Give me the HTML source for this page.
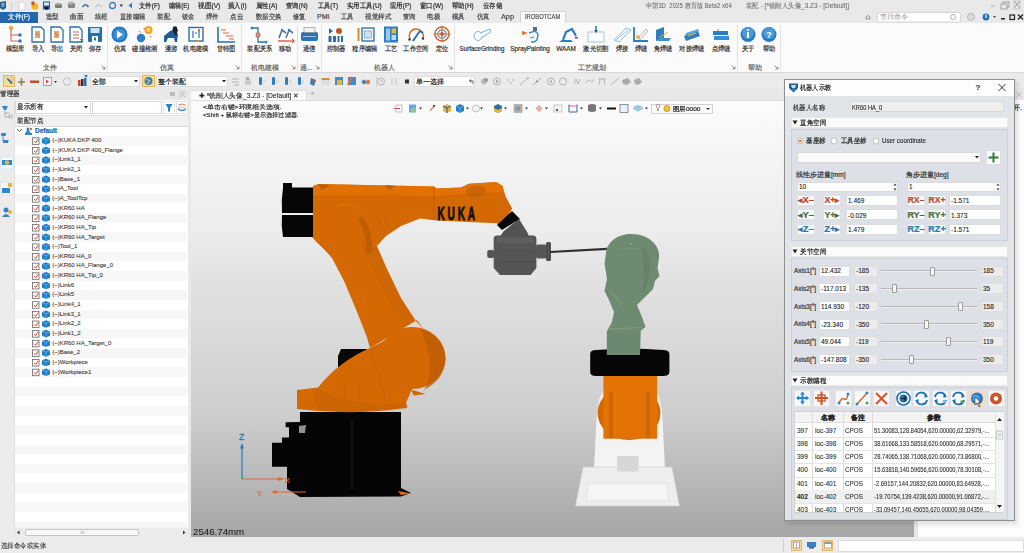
<!DOCTYPE html>
<html><head><meta charset="utf-8">
<style>
*{margin:0;padding:0;box-sizing:border-box}
html,body{width:1024px;height:553px;overflow:hidden;background:#e8e8e8;font-family:"Liberation Sans",sans-serif;font-size:7px;color:#333}
.a{position:absolute}
.t{position:absolute;white-space:nowrap;line-height:1;-webkit-text-stroke:0.2px currentColor}
.mn{position:absolute;top:2px;font-size:7.5px;color:#2a2a2a;white-space:nowrap;line-height:8px}
.tb{position:absolute;top:13.5px;font-size:7.5px;color:#444;white-space:nowrap;line-height:8px}
.rl{position:absolute;top:45px;font-size:7px;color:#333;white-space:nowrap;line-height:8px;transform:translateX(-50%)}
.gl{position:absolute;top:64px;font-size:7px;color:#666;white-space:nowrap;line-height:8px;transform:translateX(-50%)}
.ri{position:absolute;top:26px;width:16px;height:17px;transform:translateX(-50%)}
.sep{position:absolute;top:25px;width:1px;height:46px;background:#e2e2e2}
.lch{position:absolute;top:65px;width:4px;height:4px;border-right:1px solid #888;border-bottom:1px solid #888}
.ti{position:absolute;top:76px;width:10px;height:10px}
</style></head><body>
<div class="a" style="left:0;top:0;width:1024px;height:23px;background:#e9e9ea"></div>
<svg class="a" style="left:0;top:0" width="136" height="12" viewBox="0 0 136 12"><path d="M0 2 L6 1 L6 8 L3 10 L0 8Z" fill="#2b5d8e"/><path d="M1 3 L5 3 L4 7 L2 7Z" fill="#7aa6cc"/><rect x="11" y="2" width="1" height="8" fill="#cfcfcf"/><path d="M19 2 L23 2 L25 4 L25 10 L19 10Z" fill="#fbfbfb" stroke="#c8c8c8" stroke-width="0.6"/><circle cx="35" cy="6.5" r="3.3" fill="#f3b81e"/><path d="M31 2 L34 1 L35 4 L32 6Z" fill="#d2592a"/><rect x="43" y="1.5" width="7" height="8" fill="#1d5a94"/><rect x="44" y="2.5" width="5" height="3" fill="#dce9f5"/><rect x="45" y="7" width="3" height="2.5" fill="#111"/><rect x="55" y="4" width="7" height="4" rx="1" fill="#7d7d7d"/><rect x="56" y="3" width="5" height="2" fill="#aaa"/><rect x="68" y="3" width="7" height="5" rx="1" fill="#858585"/><rect x="69" y="1.5" width="4" height="3" fill="#b5b5b5"/><path d="M82.5 7 Q85.5 2.5 88.5 7" fill="none" stroke="#2d6aa5" stroke-width="1.4"/><path d="M95.5 7 Q98.5 2.5 101.5 7" fill="none" stroke="#b8b8b8" stroke-width="1.2"/><circle cx="112.5" cy="5.5" r="3" fill="none" stroke="#3a7bbf" stroke-width="1.3"/><path d="M119.5 4.5 L123 4.5 L121.25 7Z" fill="#333"/><path d="M132 2.5 L132 8.5 L128.5 5.5Z" fill="#2d86d2"/></svg>
<div class="t" id="tx1" style="left:139px;top:1.5px;font-size:7px;color:#2a2a2a;line-height:8.4px;transform:scaleX(0.913);transform-origin:0 0;">文件(F)</div>
<div class="t" id="tx2" style="left:169px;top:1.5px;font-size:7px;color:#2a2a2a;line-height:8.4px;transform:scaleX(0.870);transform-origin:0 0;">编辑(E)</div>
<div class="t" id="tx3" style="left:198px;top:1.5px;font-size:7px;color:#2a2a2a;line-height:8.4px;transform:scaleX(0.957);transform-origin:0 0;">视图(V)</div>
<div class="t" id="tx4" style="left:228px;top:1.5px;font-size:7px;color:#2a2a2a;line-height:8.4px;transform:scaleX(0.905);transform-origin:0 0;">插入(I)</div>
<div class="t" id="tx5" style="left:256px;top:1.5px;font-size:7px;color:#2a2a2a;line-height:8.4px;transform:scaleX(0.913);transform-origin:0 0;">属性(A)</div>
<div class="t" id="tx6" style="left:286px;top:1.5px;font-size:7px;color:#2a2a2a;line-height:8.4px;transform:scaleX(0.917);transform-origin:0 0;">查询(N)</div>
<div class="t" id="tx7" style="left:318px;top:1.5px;font-size:7px;color:#2a2a2a;line-height:8.4px;transform:scaleX(0.870);transform-origin:0 0;">工具(T)</div>
<div class="t" id="tx8" style="left:347px;top:1.5px;font-size:7px;color:#2a2a2a;line-height:8.4px;transform:scaleX(0.921);transform-origin:0 0;">实用工具(U)</div>
<div class="t" id="tx9" style="left:390px;top:1.5px;font-size:7px;color:#2a2a2a;line-height:8.4px;transform:scaleX(0.913);transform-origin:0 0;">应用(P)</div>
<div class="t" id="tx10" style="left:420px;top:1.5px;font-size:7px;color:#2a2a2a;line-height:8.4px;transform:scaleX(0.920);transform-origin:0 0;">窗口(W)</div>
<div class="t" id="tx11" style="left:452px;top:1.5px;font-size:7px;color:#2a2a2a;line-height:8.4px;transform:scaleX(0.917);transform-origin:0 0;">帮助(H)</div>
<div class="t" id="tx12" style="left:483px;top:1.5px;font-size:7px;color:#2a2a2a;line-height:8.4px;transform:scaleX(0.905);transform-origin:0 0;">云存储</div>
<div class="t" id="tx13" style="left:646px;top:1.5px;font-size:7px;color:#6a6a6a;line-height:8.4px;transform:scaleX(0.869);transform-origin:0 0;-webkit-text-stroke:0.05px #666;">中望3D&nbsp; 2025 教育版 Beta2 x64</div>
<div class="t" id="tx14" style="left:746px;top:1.5px;font-size:7px;color:#6a6a6a;line-height:8.4px;transform:scaleX(0.920);transform-origin:0 0;-webkit-text-stroke:0.05px #666;">装配 - [*铣削人头像_3.Z3 - [Default]]</div>
<svg class="a" style="left:985px;top:0" width="39" height="11"><rect x="6" y="5.5" width="4" height="1" fill="#aaa"/><rect x="18" y="2" width="6" height="5" fill="none" stroke="#999" stroke-width="0.9"/><rect x="16" y="4" width="6" height="5" fill="#e9e9ea" stroke="#999" stroke-width="0.9"/><path d="M29 1 L35 8 M35 1 L29 8" stroke="#999" stroke-width="1"/><rect x="29" y="1" width="6" height="8" fill="none" stroke="#aaa" stroke-width="0.5"/></svg>
<div class="a" style="left:0;top:12px;width:38px;height:11px;background:#2466ae"></div>
<div class="t" id="tx15" style="left:8px;top:13px;font-size:7px;color:#e6f0fb;line-height:8.4px;transform:scaleX(0.957);transform-origin:0 0;">文件(F)</div>
<div class="t" id="tx16" style="left:45.6px;top:13px;font-size:7px;color:#444;line-height:8.4px;transform:scaleX(0.914);transform-origin:0 0;">造型</div>
<div class="t" id="tx17" style="left:70px;top:13px;font-size:7px;color:#444;line-height:8.4px;transform:scaleX(0.964);transform-origin:0 0;">曲面</div>
<div class="t" id="tx18" style="left:95px;top:13px;font-size:7px;color:#444;line-height:8.4px;transform:scaleX(0.893);transform-origin:0 0;">线框</div>
<div class="t" id="tx19" style="left:120px;top:13px;font-size:7px;color:#444;line-height:8.4px;transform:scaleX(0.893);transform-origin:0 0;">直接编辑</div>
<div class="t" id="tx20" style="left:157px;top:13px;font-size:7px;color:#444;line-height:8.4px;transform:scaleX(0.929);transform-origin:0 0;">装配</div>
<div class="t" id="tx21" style="left:182px;top:13px;font-size:7px;color:#444;line-height:8.4px;transform:scaleX(0.893);transform-origin:0 0;">钣金</div>
<div class="t" id="tx22" style="left:206px;top:13px;font-size:7px;color:#444;line-height:8.4px;transform:scaleX(0.893);transform-origin:0 0;">焊件</div>
<div class="t" id="tx23" style="left:230px;top:13px;font-size:7px;color:#444;line-height:8.4px;transform:scaleX(0.929);transform-origin:0 0;">点云</div>
<div class="t" id="tx24" style="left:255.7px;top:13px;font-size:7px;color:#444;line-height:8.4px;transform:scaleX(0.911);transform-origin:0 0;">数据交换</div>
<div class="t" id="tx25" style="left:293px;top:13px;font-size:7px;color:#444;line-height:8.4px;transform:scaleX(0.893);transform-origin:0 0;">修复</div>
<div class="t" id="tx26" style="left:317px;top:13px;font-size:7px;color:#444;line-height:8.4px;transform:scaleX(1.000);transform-origin:0 0;">PMI</div>
<div class="t" id="tx27" style="left:340.7px;top:13px;font-size:7px;color:#444;line-height:8.4px;transform:scaleX(0.893);transform-origin:0 0;">工具</div>
<div class="t" id="tx28" style="left:365px;top:13px;font-size:7px;color:#444;line-height:8.4px;transform:scaleX(0.929);transform-origin:0 0;">视觉样式</div>
<div class="t" id="tx29" style="left:402.8px;top:13px;font-size:7px;color:#444;line-height:8.4px;transform:scaleX(0.907);transform-origin:0 0;">查询</div>
<div class="t" id="tx30" style="left:427px;top:13px;font-size:7px;color:#444;line-height:8.4px;transform:scaleX(0.929);transform-origin:0 0;">电极</div>
<div class="t" id="tx31" style="left:451.7px;top:13px;font-size:7px;color:#444;line-height:8.4px;transform:scaleX(0.914);transform-origin:0 0;">模具</div>
<div class="t" id="tx32" style="left:477px;top:13px;font-size:7px;color:#444;line-height:8.4px;transform:scaleX(0.893);transform-origin:0 0;">仿真</div>
<div class="t" id="tx33" style="left:501px;top:13px;font-size:7px;color:#444;line-height:8.4px;transform:scaleX(1.042);transform-origin:0 0;">App</div>
<div class="a" style="left:520px;top:11px;width:46px;height:13px;background:#fbfbfb;border:1px solid #d4d4d4;border-bottom:none"></div>
<div class="t" id="tx34" style="left:525px;top:13px;font-size:6.5px;color:#555;line-height:7.8px;transform:scaleX(0.897);transform-origin:0 0;">IROBOTCAM</div>
<svg class="a" style="left:862px;top:11px" width="162" height="12"><path d="M4 8 L4 6 Q6 3 8 6 L8 8Z" fill="none" stroke="#888" stroke-width="0.9"/><rect x="15.5" y="1.5" width="83" height="9.5" fill="#fff" stroke="#d0d0d0" stroke-width="0.8"/><circle cx="91" cy="6" r="2.5" fill="none" stroke="#aaa" stroke-width="0.9"/><circle cx="109" cy="6" r="3.5" fill="#ddd" stroke="#aaa" stroke-width="0.8"/><circle cx="124" cy="6" r="3.4" fill="#1e6db8"/><rect x="123.3" y="3.5" width="1.4" height="3.5" fill="#dfe"/><path d="M131 5 L134 5 L132.5 7Z" fill="#444"/><rect x="139" y="7" width="4" height="1.5" fill="#222"/><rect x="148" y="4" width="4.5" height="4.5" fill="none" stroke="#222" stroke-width="1.2"/><path d="M156 3.5 L161 8.5 M161 3.5 L156 8.5" stroke="#222" stroke-width="1.3"/></svg>
<div class="t" id="tx35" style="left:880px;top:13px;font-size:6.5px;color:#999;line-height:7.8px;-webkit-text-stroke:0;">查找命令</div>
<div class="a" style="left:0;top:23px;width:1024px;height:50px;background:#fbfbfb"></div>
<div class="a" style="left:0;top:72px;width:1024px;height:1px;background:#d9d9d9"></div>
<div class="t" id="tx36" style="left:15px;top:45px;font-size:6.5px;color:#333;line-height:7.8px;transform:translateX(-50%) scaleX(0.893);transform-origin:50% 0;">模型库</div>
<div class="t" id="tx37" style="left:38px;top:45px;font-size:6.5px;color:#333;line-height:7.8px;transform:translateX(-50%) scaleX(0.893);transform-origin:50% 0;">导入</div>
<div class="t" id="tx38" style="left:57px;top:45px;font-size:6.5px;color:#333;line-height:7.8px;transform:translateX(-50%) scaleX(0.893);transform-origin:50% 0;">导出</div>
<div class="t" id="tx39" style="left:76px;top:45px;font-size:6.5px;color:#333;line-height:7.8px;transform:translateX(-50%) scaleX(0.893);transform-origin:50% 0;">关闭</div>
<div class="t" id="tx40" style="left:95px;top:45px;font-size:6.5px;color:#333;line-height:7.8px;transform:translateX(-50%) scaleX(0.893);transform-origin:50% 0;">保存</div>
<div class="t" id="tx41" style="left:119.5px;top:45px;font-size:6.5px;color:#333;line-height:7.8px;transform:translateX(-50%) scaleX(0.893);transform-origin:50% 0;">仿真</div>
<div class="t" id="tx42" style="left:145px;top:45px;font-size:6.5px;color:#333;line-height:7.8px;transform:translateX(-50%) scaleX(0.893);transform-origin:50% 0;">碰撞检测</div>
<div class="t" id="tx43" style="left:171px;top:45px;font-size:6.5px;color:#333;line-height:7.8px;transform:translateX(-50%) scaleX(0.893);transform-origin:50% 0;">漫游</div>
<div class="t" id="tx44" style="left:196px;top:45px;font-size:6.5px;color:#333;line-height:7.8px;transform:translateX(-50%) scaleX(0.893);transform-origin:50% 0;">机电建模</div>
<div class="t" id="tx45" style="left:226px;top:45px;font-size:6.5px;color:#333;line-height:7.8px;transform:translateX(-50%) scaleX(0.893);transform-origin:50% 0;">甘特图</div>
<div class="t" id="tx46" style="left:260px;top:45px;font-size:6.5px;color:#333;line-height:7.8px;transform:translateX(-50%) scaleX(0.893);transform-origin:50% 0;">装配关系</div>
<div class="t" id="tx47" style="left:285px;top:45px;font-size:6.5px;color:#333;line-height:7.8px;transform:translateX(-50%) scaleX(0.893);transform-origin:50% 0;">移动</div>
<div class="t" id="tx48" style="left:309px;top:45px;font-size:6.5px;color:#333;line-height:7.8px;transform:translateX(-50%) scaleX(0.893);transform-origin:50% 0;">通信</div>
<div class="t" id="tx49" style="left:336px;top:45px;font-size:6.5px;color:#333;line-height:7.8px;transform:translateX(-50%) scaleX(0.893);transform-origin:50% 0;">控制器</div>
<div class="t" id="tx50" style="left:365px;top:45px;font-size:6.5px;color:#333;line-height:7.8px;transform:translateX(-50%) scaleX(0.893);transform-origin:50% 0;">程序编辑</div>
<div class="t" id="tx51" style="left:391px;top:45px;font-size:6.5px;color:#333;line-height:7.8px;transform:translateX(-50%) scaleX(0.893);transform-origin:50% 0;">工艺</div>
<div class="t" id="tx52" style="left:416px;top:45px;font-size:6.5px;color:#333;line-height:7.8px;transform:translateX(-50%) scaleX(0.893);transform-origin:50% 0;">工作空间</div>
<div class="t" id="tx53" style="left:442px;top:45px;font-size:6.5px;color:#333;line-height:7.8px;transform:translateX(-50%) scaleX(0.893);transform-origin:50% 0;">定位</div>
<div class="t" id="tx54" style="left:482px;top:45px;font-size:6.5px;color:#333;line-height:7.8px;transform:translateX(-50%) scaleX(0.957);transform-origin:50% 0;">SurfaceGrinding</div>
<div class="t" id="tx55" style="left:530px;top:45px;font-size:6.5px;color:#333;line-height:7.8px;transform:translateX(-50%) scaleX(0.975);transform-origin:50% 0;">SprayPainting</div>
<div class="t" id="tx56" style="left:566px;top:45px;font-size:6.5px;color:#333;line-height:7.8px;transform:translateX(-50%) scaleX(0.980);transform-origin:50% 0;">WAAM</div>
<div class="t" id="tx57" style="left:596px;top:45px;font-size:6.5px;color:#333;line-height:7.8px;transform:translateX(-50%) scaleX(0.893);transform-origin:50% 0;">激光切割</div>
<div class="t" id="tx58" style="left:622px;top:45px;font-size:6.5px;color:#333;line-height:7.8px;transform:translateX(-50%) scaleX(0.893);transform-origin:50% 0;">焊接</div>
<div class="t" id="tx59" style="left:641px;top:45px;font-size:6.5px;color:#333;line-height:7.8px;transform:translateX(-50%) scaleX(0.893);transform-origin:50% 0;">焊缝</div>
<div class="t" id="tx60" style="left:663px;top:45px;font-size:6.5px;color:#333;line-height:7.8px;transform:translateX(-50%) scaleX(0.893);transform-origin:50% 0;">角焊缝</div>
<div class="t" id="tx61" style="left:692px;top:45px;font-size:6.5px;color:#333;line-height:7.8px;transform:translateX(-50%) scaleX(0.893);transform-origin:50% 0;">对接焊缝</div>
<div class="t" id="tx62" style="left:721px;top:45px;font-size:6.5px;color:#333;line-height:7.8px;transform:translateX(-50%) scaleX(0.893);transform-origin:50% 0;">点焊缝</div>
<div class="t" id="tx63" style="left:748px;top:45px;font-size:6.5px;color:#333;line-height:7.8px;transform:translateX(-50%) scaleX(0.893);transform-origin:50% 0;">关于</div>
<div class="t" id="tx64" style="left:769px;top:45px;font-size:6.5px;color:#333;line-height:7.8px;transform:translateX(-50%) scaleX(0.893);transform-origin:50% 0;">帮助</div>
<div class="t" id="tx65" style="left:50px;top:64px;font-size:6.5px;color:#666;line-height:7.8px;transform:translateX(-50%);transform-origin:50% 0;">文件</div>
<div class="t" id="tx66" style="left:167px;top:64px;font-size:6.5px;color:#666;line-height:7.8px;transform:translateX(-50%);transform-origin:50% 0;">仿真</div>
<div class="t" id="tx67" style="left:265px;top:64px;font-size:6.5px;color:#666;line-height:7.8px;transform:translateX(-50%);transform-origin:50% 0;">机电建模</div>
<div class="t" id="tx68" style="left:306px;top:64px;font-size:6.5px;color:#666;line-height:7.8px;transform:translateX(-50%);transform-origin:50% 0;">通...</div>
<div class="t" id="tx69" style="left:384px;top:64px;font-size:6.5px;color:#666;line-height:7.8px;transform:translateX(-50%);transform-origin:50% 0;">机器人</div>
<div class="t" id="tx70" style="left:592px;top:64px;font-size:6.5px;color:#666;line-height:7.8px;transform:translateX(-50%);transform-origin:50% 0;">工艺规划</div>
<div class="t" id="tx71" style="left:755px;top:64px;font-size:6.5px;color:#666;line-height:7.8px;transform:translateX(-50%);transform-origin:50% 0;">帮助</div>
<div class="sep" style="left:107px"></div>
<div class="sep" style="left:241px"></div>
<div class="sep" style="left:297px"></div>
<div class="sep" style="left:321px"></div>
<div class="sep" style="left:454px"></div>
<div class="sep" style="left:737px"></div>
<div class="sep" style="left:780px"></div>
<svg class="a" style="left:101px;top:65px" width="5" height="5"><path d="M0.5 0.5 L4 4 M4 1.5 L4 4 L1.5 4" stroke="#777" stroke-width="0.8" fill="none"/></svg>
<svg class="a" style="left:235px;top:65px" width="5" height="5"><path d="M0.5 0.5 L4 4 M4 1.5 L4 4 L1.5 4" stroke="#777" stroke-width="0.8" fill="none"/></svg>
<svg class="a" style="left:291px;top:65px" width="5" height="5"><path d="M0.5 0.5 L4 4 M4 1.5 L4 4 L1.5 4" stroke="#777" stroke-width="0.8" fill="none"/></svg>
<svg class="a" style="left:315px;top:65px" width="5" height="5"><path d="M0.5 0.5 L4 4 M4 1.5 L4 4 L1.5 4" stroke="#777" stroke-width="0.8" fill="none"/></svg>
<svg class="a" style="left:448px;top:65px" width="5" height="5"><path d="M0.5 0.5 L4 4 M4 1.5 L4 4 L1.5 4" stroke="#777" stroke-width="0.8" fill="none"/></svg>
<svg class="a" style="left:731px;top:65px" width="5" height="5"><path d="M0.5 0.5 L4 4 M4 1.5 L4 4 L1.5 4" stroke="#777" stroke-width="0.8" fill="none"/></svg>
<svg class="a" style="left:774px;top:65px" width="5" height="5"><path d="M0.5 0.5 L4 4 M4 1.5 L4 4 L1.5 4" stroke="#777" stroke-width="0.8" fill="none"/></svg>
<svg class="a" style="left:0;top:23px" width="800" height="24" viewBox="0 23 800 24">
<path d="M11 28 L11 41 L19 41 M11 35 L19 35" stroke="#c86a50" stroke-width="1.1" fill="none"/><circle cx="11" cy="28" r="1.8" fill="#f2b233" stroke="#c87a30" stroke-width="0.6"/><circle cx="20" cy="35" r="1.8" fill="#2f78b6"/><circle cx="20" cy="41" r="1.8" fill="#2f78b6"/>
<path d="M32 27 L41 27 L44 30 L44 42 L32 42Z" fill="#fff" stroke="#2b6fa8" stroke-width="1.3"/>
<rect x="35" y="31" width="5" height="7" fill="#e5a46c"/><path d="M36 33 L39 36" stroke="#c55" stroke-width="0.8"/>
<path d="M51 27 L60 27 L63 30 L63 42 L51 42Z" fill="#fff" stroke="#2b6fa8" stroke-width="1.3"/>
<rect x="54" y="31" width="5" height="7" fill="#e5a46c"/><path d="M55 33 L58 36" stroke="#c55" stroke-width="0.8"/>
<path d="M70 27 L79 27 L82 30 L82 42 L70 42Z" fill="#fff" stroke="#2b6fa8" stroke-width="1.3"/>
<path d="M73 32 H79 M73 35 H79 M73 38 H79" stroke="#c0503a" stroke-width="0.9"/><path d="M80 39 L83 42 M83 39 L80 42" stroke="#d33" stroke-width="0.9"/>
<rect x="88" y="27" width="14" height="15" rx="1" fill="#2a6ea8"/><rect x="90.5" y="28" width="9" height="5" fill="#cfe3f3"/><rect x="92" y="36" width="6" height="6" fill="#fff"/><rect x="94" y="37.5" width="2" height="3" fill="#2a6ea8"/>
<circle cx="119.5" cy="34.5" r="8" fill="#2a78be"/><circle cx="119.5" cy="34.5" r="6" fill="#3d91d6"/><path d="M117 30.5 L123 34.5 L117 38.5Z" fill="#fff"/>
<circle cx="141" cy="38" r="4.2" fill="#2c7fc6"/><circle cx="148.5" cy="30" r="4" fill="#f5a020"/><circle cx="148.5" cy="30" r="2.2" fill="#fbd36a"/><path d="M139 31 L140.5 32.5 M144 28 L144.5 29.5 M150 36 L151.5 37" stroke="#d44" stroke-width="0.9"/>
<path d="M164 36 L170 31 L174 30 L178 34 L177 42 L175 42 L174 38 L168 38 L166 42 L164 42Z" fill="#1f5d93"/><circle cx="175" cy="28.5" r="2.2" fill="#1a1a1a"/><path d="M172 30 L175 27 L178 30 L176 36Z" fill="#222"/>
<rect x="189" y="27.5" width="14" height="13.5" fill="#fff" stroke="#2b6fa8" stroke-width="1.4"/><path d="M193 31 L193 38 M199 30 L199 38 M195 33 L197 33" stroke="#2b6fa8" stroke-width="1.2"/><circle cx="199" cy="30" r="1" fill="#d44"/><rect x="196.5" y="40" width="3" height="2" fill="#e58a30"/>
<path d="M218 27 L218 42 L235 42" stroke="#2b6fa8" stroke-width="1.6" fill="none"/><path d="M221 30 H226 M223 33 H229 M226 36 H233 M229 39 H234" stroke="#d16b4a" stroke-width="1.2"/>
<path d="M252 28 L258 28 L258 42 L266 42" stroke="#2b6fa8" stroke-width="1.3" fill="none"/><rect x="256" y="33" width="4" height="4" fill="#e08a7a" stroke="#a55" stroke-width="0.5"/><circle cx="266" cy="42" r="1.5" fill="#2f8ad0"/><circle cx="252" cy="28" r="1.5" fill="#2f8ad0"/>
<path d="M278 41 L294 41" stroke="#c9472c" stroke-width="1.2"/><path d="M292 39 L294.5 41 L292 43" stroke="#c9472c" stroke-width="1" fill="none"/><path d="M279 38 L282 30 L286 33 M286 38 L289 30 L293 33" stroke="#5a6f86" stroke-width="1.6" fill="none"/><circle cx="282" cy="30" r="1.2" fill="#2f8ad0"/><circle cx="289" cy="30" r="1.2" fill="#2f8ad0"/>
<rect x="301" y="32" width="17" height="9" rx="2" fill="#2c73b4"/><rect x="304" y="27.5" width="11" height="5" fill="#f2f2f2" stroke="#888" stroke-width="0.6"/><rect x="303" y="36" width="13" height="1" fill="#9cc6ea"/>
<path d="M329 28 L333 31 L329 34Z" fill="#2b6fa8"/><circle cx="339" cy="31" r="3" fill="#c8531f"/><rect x="328.5" y="36" width="3" height="6" fill="#2b6fa8"/><rect x="333" y="36" width="3" height="6" fill="#2b6fa8"/><rect x="337.5" y="36" width="2" height="6" fill="#2b6fa8"/><rect x="341" y="36" width="2" height="6" fill="#2b6fa8"/>
<rect x="357.5" y="28" width="2" height="13" fill="#e08a1e"/><rect x="362" y="28" width="12" height="13" fill="#f4f4f4" stroke="#2b6fa8" stroke-width="1.3"/><rect x="364.5" y="31" width="7" height="7" fill="#cfe0ee" stroke="#5d8fbf" stroke-width="0.6"/>
<rect x="384" y="26.5" width="14" height="16" fill="#2e7fc1"/><rect x="386" y="28.5" width="4" height="12" fill="#9fc9ea"/><rect x="391.5" y="28.5" width="4.5" height="5" fill="#f2b233"/><rect x="391.5" y="35" width="4.5" height="5" fill="#bcd8ef"/>
<path d="M410 39 A7 7 0 1 1 423 38" stroke="#cf6a2a" stroke-width="1.4" fill="none"/><path d="M413 41 L417 35 L420 31 L423 33" stroke="#2b6fa8" stroke-width="2" fill="none"/><circle cx="409.5" cy="39.5" r="1.2" fill="#333"/><circle cx="423" cy="38.5" r="1.2" fill="#333"/>
<circle cx="442" cy="34" r="7" fill="none" stroke="#cf6a2a" stroke-width="1.6"/><circle cx="442" cy="34" r="4.2" fill="#e9f1f8" stroke="#2b6fa8" stroke-width="1"/><path d="M442 25.5 V42.5 M433.5 34 H450.5" stroke="#cf6a2a" stroke-width="0.9"/><path d="M439.5 34 L442 31.5 L444.5 34 L442 36.5Z" fill="#d35a20"/>
<ellipse cx="478" cy="36" rx="4" ry="4.5" fill="none" stroke="#7fb5dc" stroke-width="1"/><path d="M480 33 L490 29 L491 32 L481 38" fill="#f4f9fd" stroke="#7fb5dc" stroke-width="1"/>
<path d="M522 31 L528 33 L522 35Z" fill="#e5692a"/><rect x="533" y="27" width="4" height="4" fill="#666"/><path d="M529 33 L535 31 L538 34 L537 40 L534 42 L531 42" stroke="#3b8fcf" stroke-width="1.5" fill="none"/><path d="M530 38 L534 37" stroke="#3b8fcf" stroke-width="1.2"/>
<path d="M559 42 L573 42 L571 40 L562 40Z" fill="#2b7ec2"/><path d="M563 40 L566 32 L572 29 L576 36" stroke="#2b7ec2" stroke-width="2.2" fill="none"/><rect x="575" y="37" width="3" height="1.5" fill="#555"/>
<rect x="588" y="32" width="16" height="10" fill="#fafcfe" stroke="#9bc1de" stroke-width="0.9"/><path d="M596 26 L596 32" stroke="#2b6fa8" stroke-width="1.5"/><path d="M594 30 L596 33 L598 30Z" fill="#1f5d93"/>
<path d="M614 40 L626 28 L631 30 L619 42Z" fill="#eef5fb" stroke="#8ab8dd" stroke-width="0.9"/><path d="M616 40 L628 30" stroke="#8ab8dd" stroke-width="0.7"/>
<path d="M634 27 L634 41 L648 41" stroke="#2b7ec2" stroke-width="1.8" fill="none"/><path d="M638 38 L646 29 L648 31 L640 40Z" fill="#f1f1f1" stroke="#999" stroke-width="0.6"/><circle cx="638" cy="37" r="2" fill="#f2b233"/>
<path d="M656 30 L664 27 L664 38 L656 41Z" fill="#2b7ec2"/><path d="M656 41 L669 41 L671 38 L664 38Z" fill="#3c8ed0"/><path d="M659 38 L668 32" stroke="#f2b233" stroke-width="1"/>
<path d="M684 36 L698 31 L700 36 L686 41Z" fill="#2b7ec2"/><path d="M686 33 L698 29 L699 31 L685 36Z" fill="#5fa6dc"/><path d="M688 36 L696 33" stroke="#f2b233" stroke-width="1.2"/>
<path d="M713 31 L728 31 L728 35 L713 35Z" fill="#2b7ec2"/><path d="M714 36 L729 36 L729 40 L714 40Z" fill="#3c8ed0"/><circle cx="718" cy="30" r="1" fill="#f2b233"/>
<circle cx="748" cy="34.5" r="7.5" fill="#2a78be"/><circle cx="748" cy="33" r="6" fill="#4a9ad8"/><rect x="747" y="32" width="2" height="6" fill="#fff"/><circle cx="748" cy="30" r="1" fill="#fff"/>
<circle cx="769" cy="34.5" r="7.5" fill="#2a78be"/><circle cx="769" cy="33" r="6" fill="#4a9ad8"/><text x="766.3" y="37.5" font-size="9" font-weight="bold" fill="#fff" font-family="Liberation Sans">?</text>
</svg>
<div class="a" style="left:0;top:73px;width:1024px;height:15px;background:#ebebeb"></div>
<div class="a" style="left:3px;top:75px;width:12px;height:12px;background:#f9dd8f;border:1px solid #e5b766"></div>
<div class="a" style="left:142px;top:75px;width:13px;height:12px;background:#f9dd8f;border:1px solid #e5b766"></div>
<div class="a" style="left:90px;top:76px;width:50px;height:11px;background:#fff;border:1px solid #dcdcdc"></div>
<div class="t" id="tx72" style="left:92px;top:77.5px;font-size:7px;color:#222;line-height:8.4px;">全部</div>
<svg class="a" style="left:134px;top:80px" width="4" height="3"><path d="M0 0 H4 L2 2.5Z" fill="#222"/></svg>
<div class="a" style="left:156px;top:76px;width:72px;height:11px;background:#fff;border:1px solid #dcdcdc"></div>
<div class="t" id="tx73" style="left:158px;top:77.5px;font-size:7px;color:#222;line-height:8.4px;">整个装配</div>
<svg class="a" style="left:222px;top:80px" width="4" height="3"><path d="M0 0 H4 L2 2.5Z" fill="#222"/></svg>
<div class="a" style="left:414px;top:76px;width:61px;height:11px;background:#fff;border:1px solid #dcdcdc"></div>
<div class="t" id="tx74" style="left:416px;top:77.5px;font-size:7px;color:#222;line-height:8.4px;">单一选择</div>
<svg class="a" style="left:469px;top:80px" width="4" height="3"><path d="M0 0 H4 L2 2.5Z" fill="#222"/></svg>
<svg class="a" style="left:0;top:73px" width="660" height="15" viewBox="0 73 660 15">
<path d="M6 78 L11 84 L13 83 L9 79Z" fill="#2b6fa8"/><path d="M10 78 L13 77 M11 80 L14 80" stroke="#d88" stroke-width="0.7"/>
<path d="M18 82 L25 82 M21.5 78 L21.5 86" stroke="#d16b3a" stroke-width="1.4"/><circle cx="21.5" cy="82" r="1.6" fill="#5aa05a"/>
<rect x="30" y="80.5" width="9" height="2.5" fill="#c8462c"/>
<rect x="43.5" y="77.5" width="8" height="8" fill="#f4f4f4" stroke="#888" stroke-width="0.7"/><path d="M46 79.5 L49 81.5 L46 83.5Z" fill="#d44"/><path d="M54 81 H57 L55.5 83Z" fill="#333"/>
<path d="M63 81.5 L65 78 L69 78 L71 81.5 L69 85 L65 85Z" fill="none" stroke="#bbb" stroke-width="0.9"/>
<rect x="78" y="80" width="2.5" height="6" fill="#c8462c"/><rect x="81" y="79" width="2.5" height="7" fill="#333"/><rect x="84" y="78" width="2.5" height="8" fill="#2b6fa8"/><path d="M84 75 L88 75 L86 78Z" fill="#2b86d2"/>
<circle cx="148.5" cy="81" r="4" fill="#3c7fc0"/><path d="M146 79 L150 81 L147 84" stroke="#fbd36a" stroke-width="1" fill="none"/>
<path d="M232 79 H239 M232 82 H239 M234 85 H239" stroke="#aaa" stroke-width="0.9"/>
<rect x="245" y="79" width="6" height="6" fill="#ccc"/><rect x="246" y="77" width="3" height="3" fill="#aaa"/>
<rect x="259" y="77" width="3" height="8" rx="1.2" fill="#2b7ec2"/><path d="M263 80 L265 81.5 L263 83" stroke="#bbb" stroke-width="0.6" fill="none"/>
<rect x="272" y="77" width="3" height="8" rx="1.2" fill="#2b7ec2"/><path d="M276 80 L278 81.5 L276 83" stroke="#bbb" stroke-width="0.6" fill="none"/>
<rect x="285" y="77" width="3" height="8" rx="1.2" fill="#2b7ec2"/><path d="M289 80 L291 81.5 L289 83" stroke="#bbb" stroke-width="0.6" fill="none"/>
<rect x="298" y="77" width="3" height="8" rx="1.2" fill="#2b7ec2"/><path d="M302 80 L304 81.5 L302 83" stroke="#bbb" stroke-width="0.6" fill="none"/>
<path d="M311 78 L316 80 L314 86 L310 84Z" fill="#2b7ec2"/><path d="M313 79 L316 81 L314 83Z" fill="#e05a30"/>
<rect x="321.5" y="78" width="8" height="7" fill="#ddd"/><rect x="321.5" y="78" width="8" height="2" fill="#e08a2a"/>
<rect x="335" y="77" width="8" height="8" fill="#3a8fd2"/><rect x="337" y="80" width="5" height="5" fill="#f2b233"/>
<rect x="348" y="77" width="8" height="8" fill="#3a8fd2"/><path d="M348 85 L352 77" stroke="#e5692a" stroke-width="2"/>
<rect x="361" y="79" width="9" height="6" fill="#ddd"/><circle cx="364" cy="82" r="2" fill="#2b7ec2"/><circle cx="368" cy="82" r="2" fill="#e5692a"/>
<rect x="376" y="76" width="1" height="11" fill="#d5d5d5"/>
<circle cx="381" cy="81.5" r="3.5" fill="none" stroke="#aaa" stroke-width="0.9"/><path d="M381 79.5 V81.5 H382.5" stroke="#aaa" stroke-width="0.7" fill="none"/>
<path d="M392 78 L392 85 M396 78 L396 85" stroke="#bbb" stroke-width="0.8"/>
<rect x="405" y="79.5" width="4" height="4" fill="#333"/>
<path d="M469 78 L473 85 L474 82 L476 83Z" fill="#aaa"/>
<circle cx="484" cy="81.5" r="3" fill="#bbb"/><circle cx="486" cy="80" r="2" fill="#999"/>
<circle cx="497" cy="81.5" r="3.5" fill="none" stroke="#aaa" stroke-width="0.9"/><path d="M496 79.5 L499 81.5 L496 83.5Z" fill="#aaa"/>
<path d="M507 80 H509 M512 80 H514 M510 83 H512" stroke="#aaa" stroke-width="0.9"/>
<path d="M520 85 L528 78" stroke="#aaa" stroke-width="0.9"/><circle cx="528" cy="78" r="0.8" fill="#888"/>
<path d="M533 85 L541 78" stroke="#aaa" stroke-width="1"/><circle cx="537" cy="81.5" r="1" fill="#888"/>
<circle cx="551" cy="81.5" r="3.5" fill="none" stroke="#aaa" stroke-width="0.9"/><circle cx="551" cy="81.5" r="0.9" fill="#888"/>
<circle cx="563" cy="81.5" r="3.6" fill="none" stroke="#aaa" stroke-width="0.9"/>
<path d="M574 84 L576 79 L578 84 L580 79" stroke="#aaa" stroke-width="0.8" fill="none"/>
<path d="M586 83 Q588 78 590 81 Q592 84 594 79" stroke="#aaa" stroke-width="0.8" fill="none"/>
<path d="M598 79 H606 M600 79 L599 85 M604 79 L605 85" stroke="#aaa" stroke-width="0.8" fill="none"/>
<path d="M611 85 L619 78" stroke="#aaa" stroke-width="0.9"/>
<path d="M622 80 L628 78 L631 82 L627 85 L623 84Z" fill="#aaa"/>
<path d="M634 80 L639 78 L642 82 L638 85 L635 84Z" fill="#aaa"/>
</svg>
<div class="a" style="left:0;top:88px;width:191px;height:452px;background:#e8e8e8"></div>
<div class="t" id="tx75" style="left:0px;top:90px;font-size:6.5px;color:#333;line-height:7.8px;transform:scaleX(0.929);transform-origin:0 0;">管理器</div>
<svg class="a" style="left:168px;top:89px" width="20" height="10"><rect x="2" y="3" width="5" height="4" fill="#bbb"/><path d="M11.5 2 L17 8 M17 2 L11.5 8" stroke="#bbb" stroke-width="1"/><rect x="11.5" y="2" width="5.5" height="6" fill="none" stroke="#ccc" stroke-width="0.5"/></svg>
<div class="a" style="left:0;top:100px;width:14px;height:437px;background:#ececec"></div>
<svg class="a" style="left:0;top:100px" width="14" height="120" viewBox="0 100 14 120"><path d="M2 106 L8 106 L6 110 L4 110Z" fill="#2d86d2"/><path d="M5 110 V117 H10 M5 113 H9" stroke="#999" stroke-width="0.7" fill="none"/><rect x="9" y="115" width="3" height="3" fill="none" stroke="#999" stroke-width="0.6"/><rect x="1" y="133" width="5" height="3" rx="1" fill="#2d86d2"/><path d="M3 136 V141 H9" stroke="#2d86d2" stroke-width="0.9" fill="none"/><rect x="3" y="140" width="5" height="3" fill="#2d86d2"/><rect x="1" y="157" width="12" height="12" fill="#f7f7f7" stroke="#c8d8e8" stroke-width="0.5"/><rect x="2" y="160" width="10" height="5" fill="#2d86d2"/><circle cx="7" cy="162.5" r="2.2" fill="#f2b233"/><rect x="1" y="182" width="12" height="12" fill="#f7f7f7" stroke="#c8d8e8" stroke-width="0.5"/><rect x="2" y="188" width="8" height="5" fill="#2d86d2"/><rect x="8" y="183" width="4" height="4" fill="#f2b233"/><circle cx="6" cy="210" r="2.5" fill="#2d86d2"/><path d="M2 217 Q6 211 10 217Z" fill="#2d86d2"/><circle cx="10" cy="212" r="2" fill="#f2b233"/></svg>
<div class="a" style="left:14px;top:100px;width:174px;height:437px;background:#fff;border-left:1px solid #e0e0e0"></div>
<div class="a" style="left:15px;top:101px;width:76px;height:13px;background:#fff;border:1px solid #d8d8d8"></div>
<div class="t" id="tx76" style="left:17px;top:103px;font-size:6.5px;color:#222;line-height:7.8px;transform:scaleX(0.929);transform-origin:0 0;">显示所有</div>
<svg class="a" style="left:84px;top:106px" width="5" height="3"><path d="M0 0 H4 L2 2.5Z" fill="#222"/></svg>
<div class="a" style="left:92px;top:101px;width:70px;height:13px;background:#fff;border:1px solid #d8d8d8"></div>
<div class="a" style="left:163px;top:101px;width:12px;height:13px;background:#fff;border:1px solid #e3e3e3"></div>
<div class="a" style="left:176px;top:101px;width:12px;height:13px;background:#fff;border:1px solid #e3e3e3"></div>
<svg class="a" style="left:163px;top:101px" width="25" height="13"><path d="M2.5 3 L9.5 3 L7 7 L7 10.5 L5 10.5 L5 7Z" fill="#1f86c9"/><path d="M15.5 4 Q19 2 22.5 4" stroke="#d66" stroke-width="0.9" fill="none"/><rect x="15" y="5" width="8" height="3" fill="#f3e0d0"/><path d="M15 8 Q19 11 23 8" stroke="#2d86d2" stroke-width="1.3" fill="none"/></svg>
<div class="a" style="left:15px;top:115px;width:173px;height:12px;background:#f1f1f1;border-top:1px solid #e2e2e2;border-bottom:1px solid #dcdcdc"></div>
<div class="t" id="tx77" style="left:17px;top:117px;font-size:6.5px;color:#333;line-height:7.8px;transform:scaleX(0.929);transform-origin:0 0;">装配节点</div>
<div class="a" style="left:15px;top:136.02px;width:172px;height:9.64px;background:#f7f7f7"></div>
<div class="a" style="left:15px;top:155.30px;width:172px;height:9.64px;background:#f7f7f7"></div>
<div class="a" style="left:15px;top:174.58px;width:172px;height:9.64px;background:#f7f7f7"></div>
<div class="a" style="left:15px;top:193.86px;width:172px;height:9.64px;background:#f7f7f7"></div>
<div class="a" style="left:15px;top:213.14px;width:172px;height:9.64px;background:#f7f7f7"></div>
<div class="a" style="left:15px;top:232.42px;width:172px;height:9.64px;background:#f7f7f7"></div>
<div class="a" style="left:15px;top:251.70px;width:172px;height:9.64px;background:#f7f7f7"></div>
<div class="a" style="left:15px;top:270.98px;width:172px;height:9.64px;background:#f7f7f7"></div>
<div class="a" style="left:15px;top:290.26px;width:172px;height:9.64px;background:#f7f7f7"></div>
<div class="a" style="left:15px;top:309.54px;width:172px;height:9.64px;background:#f7f7f7"></div>
<div class="a" style="left:15px;top:328.82px;width:172px;height:9.64px;background:#f7f7f7"></div>
<div class="a" style="left:15px;top:348.10px;width:172px;height:9.64px;background:#f7f7f7"></div>
<div class="a" style="left:15px;top:367.38px;width:172px;height:9.64px;background:#f7f7f7"></div>
<div class="a" style="left:15px;top:386.66px;width:172px;height:9.64px;background:#f7f7f7"></div>
<div class="a" style="left:15px;top:405.94px;width:172px;height:9.64px;background:#f7f7f7"></div>
<div class="a" style="left:15px;top:425.22px;width:172px;height:9.64px;background:#f7f7f7"></div>
<div class="a" style="left:15px;top:444.50px;width:172px;height:9.64px;background:#f7f7f7"></div>
<div class="a" style="left:15px;top:463.78px;width:172px;height:9.64px;background:#f7f7f7"></div>
<div class="a" style="left:15px;top:483.06px;width:172px;height:9.64px;background:#f7f7f7"></div>
<div class="a" style="left:15px;top:502.34px;width:172px;height:9.64px;background:#f7f7f7"></div>
<div class="a" style="left:15px;top:521.62px;width:172px;height:9.64px;background:#f7f7f7"></div>
<svg class="a" style="left:15px;top:126px" width="22" height="10"><path d="M2 3 L4.5 5.5 L7 3" stroke="#555" stroke-width="0.9" fill="none"/><circle cx="13" cy="3" r="1.5" fill="#2d86d2"/><path d="M10 8 L16 8 L14 4 L12 4Z" fill="#2d86d2"/><rect x="10" y="7" width="7" height="2" fill="#2d86d2"/><rect x="15" y="2" width="2" height="2" fill="#e5692a"/></svg>
<div class="t" id="tx78" style="left:35px;top:127.2px;font-size:6.5px;color:#1f62a8;line-height:7.8px;font-weight:bold;transform:scaleX(1.000);transform-origin:0 0;">Default</div>
<div class="t" id="tx79" style="left:52.2px;top:137.14px;font-size:6.0px;color:#3a3a3a;line-height:7.2px;-webkit-text-stroke:0.1px #3a3a3a;">(&#8722;)KUKA DKP 400</div>
<div class="t" id="tx80" style="left:52.2px;top:146.78px;font-size:6.0px;color:#3a3a3a;line-height:7.2px;-webkit-text-stroke:0.1px #3a3a3a;">(&#8722;)KUKA DKP 400_Flange</div>
<div class="t" id="tx81" style="left:52.2px;top:156.42px;font-size:6.0px;color:#3a3a3a;line-height:7.2px;-webkit-text-stroke:0.1px #3a3a3a;">(&#8722;)Link1_1</div>
<div class="t" id="tx82" style="left:52.2px;top:166.06px;font-size:6.0px;color:#3a3a3a;line-height:7.2px;-webkit-text-stroke:0.1px #3a3a3a;">(&#8722;)Link2_1</div>
<div class="t" id="tx83" style="left:52.2px;top:175.7px;font-size:6.0px;color:#3a3a3a;line-height:7.2px;-webkit-text-stroke:0.1px #3a3a3a;">(&#8722;)Base_1</div>
<div class="t" id="tx84" style="left:52.2px;top:185.34px;font-size:6.0px;color:#3a3a3a;line-height:7.2px;-webkit-text-stroke:0.1px #3a3a3a;">(&#8722;)A_Tool</div>
<div class="t" id="tx85" style="left:52.2px;top:194.98px;font-size:6.0px;color:#3a3a3a;line-height:7.2px;-webkit-text-stroke:0.1px #3a3a3a;">(&#8722;)A_ToolTcp</div>
<div class="t" id="tx86" style="left:52.2px;top:204.62px;font-size:6.0px;color:#3a3a3a;line-height:7.2px;-webkit-text-stroke:0.1px #3a3a3a;">(&#8722;)KR60 HA</div>
<div class="t" id="tx87" style="left:52.2px;top:214.26px;font-size:6.0px;color:#3a3a3a;line-height:7.2px;-webkit-text-stroke:0.1px #3a3a3a;">(&#8722;)KR60 HA_Flange</div>
<div class="t" id="tx88" style="left:52.2px;top:223.9px;font-size:6.0px;color:#3a3a3a;line-height:7.2px;-webkit-text-stroke:0.1px #3a3a3a;">(&#8722;)KR60 HA_Tip</div>
<div class="t" id="tx89" style="left:52.2px;top:233.54px;font-size:6.0px;color:#3a3a3a;line-height:7.2px;-webkit-text-stroke:0.1px #3a3a3a;">(&#8722;)KR60 HA_Target</div>
<div class="t" id="tx90" style="left:52.2px;top:243.18px;font-size:6.0px;color:#3a3a3a;line-height:7.2px;-webkit-text-stroke:0.1px #3a3a3a;">(&#8722;)Tool_1</div>
<div class="t" id="tx91" style="left:52.2px;top:252.82px;font-size:6.0px;color:#3a3a3a;line-height:7.2px;-webkit-text-stroke:0.1px #3a3a3a;">(&#8722;)KR60 HA_0</div>
<div class="t" id="tx92" style="left:52.2px;top:262.46px;font-size:6.0px;color:#3a3a3a;line-height:7.2px;-webkit-text-stroke:0.1px #3a3a3a;">(&#8722;)KR60 HA_Flange_0</div>
<div class="t" id="tx93" style="left:52.2px;top:272.1px;font-size:6.0px;color:#3a3a3a;line-height:7.2px;-webkit-text-stroke:0.1px #3a3a3a;">(&#8722;)KR60 HA_Tip_0</div>
<div class="t" id="tx94" style="left:52.2px;top:281.74px;font-size:6.0px;color:#3a3a3a;line-height:7.2px;-webkit-text-stroke:0.1px #3a3a3a;">(&#8722;)Link6</div>
<div class="t" id="tx95" style="left:52.2px;top:291.38px;font-size:6.0px;color:#3a3a3a;line-height:7.2px;-webkit-text-stroke:0.1px #3a3a3a;">(&#8722;)Link5</div>
<div class="t" id="tx96" style="left:52.2px;top:301.02px;font-size:6.0px;color:#3a3a3a;line-height:7.2px;-webkit-text-stroke:0.1px #3a3a3a;">(&#8722;)Link4_1</div>
<div class="t" id="tx97" style="left:52.2px;top:310.66px;font-size:6.0px;color:#3a3a3a;line-height:7.2px;-webkit-text-stroke:0.1px #3a3a3a;">(&#8722;)Link3_1</div>
<div class="t" id="tx98" style="left:52.2px;top:320.3px;font-size:6.0px;color:#3a3a3a;line-height:7.2px;-webkit-text-stroke:0.1px #3a3a3a;">(&#8722;)Link2_2</div>
<div class="t" id="tx99" style="left:52.2px;top:329.94px;font-size:6.0px;color:#3a3a3a;line-height:7.2px;-webkit-text-stroke:0.1px #3a3a3a;">(&#8722;)Link1_2</div>
<div class="t" id="tx100" style="left:52.2px;top:339.58px;font-size:6.0px;color:#3a3a3a;line-height:7.2px;-webkit-text-stroke:0.1px #3a3a3a;">(&#8722;)KR60 HA_Target_0</div>
<div class="t" id="tx101" style="left:52.2px;top:349.22px;font-size:6.0px;color:#3a3a3a;line-height:7.2px;-webkit-text-stroke:0.1px #3a3a3a;">(&#8722;)Base_2</div>
<div class="t" id="tx102" style="left:52.2px;top:358.86px;font-size:6.0px;color:#3a3a3a;line-height:7.2px;-webkit-text-stroke:0.1px #3a3a3a;">(&#8722;)Workpiece</div>
<div class="t" id="tx103" style="left:52.2px;top:368.5px;font-size:6.0px;color:#3a3a3a;line-height:7.2px;-webkit-text-stroke:0.1px #3a3a3a;">(&#8722;)Workpiece1</div>
<svg class="a" style="left:30px;top:130px" width="25" height="250" viewBox="30 130 25 250">
<rect x="32.5" y="137.84" width="6.5" height="6.5" fill="#fff" stroke="#666" stroke-width="0.8"/><path d="M34 141.14 L35.6 142.84 L38.3 139.04" stroke="#d9452b" stroke-width="1" fill="none"/>
<path d="M42 138.64 L46 137.04 L50 138.64 L50 143.04 L46 144.64 L42 143.04Z" fill="#1f7fc6"/><path d="M42 138.64 L46 140.04 L50 138.64 M46 140.04 V144.64" stroke="#7fc0ea" stroke-width="0.6" fill="none"/>
<rect x="32.5" y="147.48" width="6.5" height="6.5" fill="#fff" stroke="#666" stroke-width="0.8"/><path d="M34 150.78 L35.6 152.48 L38.3 148.68" stroke="#d9452b" stroke-width="1" fill="none"/>
<path d="M42 148.28 L46 146.68 L50 148.28 L50 152.68 L46 154.28 L42 152.68Z" fill="#1f7fc6"/><path d="M42 148.28 L46 149.68 L50 148.28 M46 149.68 V154.28" stroke="#7fc0ea" stroke-width="0.6" fill="none"/>
<rect x="32.5" y="157.12" width="6.5" height="6.5" fill="#fff" stroke="#666" stroke-width="0.8"/><path d="M34 160.42 L35.6 162.12 L38.3 158.32" stroke="#d9452b" stroke-width="1" fill="none"/>
<path d="M42 157.92 L46 156.32 L50 157.92 L50 162.32 L46 163.92 L42 162.32Z" fill="#1f7fc6"/><path d="M42 157.92 L46 159.32 L50 157.92 M46 159.32 V163.92" stroke="#7fc0ea" stroke-width="0.6" fill="none"/>
<rect x="32.5" y="166.76" width="6.5" height="6.5" fill="#fff" stroke="#666" stroke-width="0.8"/><path d="M34 170.06 L35.6 171.76 L38.3 167.96" stroke="#d9452b" stroke-width="1" fill="none"/>
<path d="M42 167.56 L46 165.96 L50 167.56 L50 171.96 L46 173.56 L42 171.96Z" fill="#1f7fc6"/><path d="M42 167.56 L46 168.96 L50 167.56 M46 168.96 V173.56" stroke="#7fc0ea" stroke-width="0.6" fill="none"/>
<rect x="32.5" y="176.40" width="6.5" height="6.5" fill="#fff" stroke="#666" stroke-width="0.8"/><path d="M34 179.70 L35.6 181.40 L38.3 177.60" stroke="#d9452b" stroke-width="1" fill="none"/>
<path d="M42 177.20 L46 175.60 L50 177.20 L50 181.60 L46 183.20 L42 181.60Z" fill="#1f7fc6"/><path d="M42 177.20 L46 178.60 L50 177.20 M46 178.60 V183.20" stroke="#7fc0ea" stroke-width="0.6" fill="none"/>
<rect x="32.5" y="186.04" width="6.5" height="6.5" fill="#fff" stroke="#666" stroke-width="0.8"/><path d="M34 189.34 L35.6 191.04 L38.3 187.24" stroke="#d9452b" stroke-width="1" fill="none"/>
<path d="M42 186.84 L46 185.24 L50 186.84 L50 191.24 L46 192.84 L42 191.24Z" fill="#1f7fc6"/><path d="M42 186.84 L46 188.24 L50 186.84 M46 188.24 V192.84" stroke="#7fc0ea" stroke-width="0.6" fill="none"/>
<rect x="32.5" y="195.68" width="6.5" height="6.5" fill="#fff" stroke="#666" stroke-width="0.8"/><path d="M34 198.98 L35.6 200.68 L38.3 196.88" stroke="#d9452b" stroke-width="1" fill="none"/>
<path d="M42 196.48 L46 194.88 L50 196.48 L50 200.88 L46 202.48 L42 200.88Z" fill="#1f7fc6"/><path d="M42 196.48 L46 197.88 L50 196.48 M46 197.88 V202.48" stroke="#7fc0ea" stroke-width="0.6" fill="none"/>
<rect x="32.5" y="205.32" width="6.5" height="6.5" fill="#fff" stroke="#666" stroke-width="0.8"/><path d="M34 208.62 L35.6 210.32 L38.3 206.52" stroke="#d9452b" stroke-width="1" fill="none"/>
<path d="M42 206.12 L46 204.52 L50 206.12 L50 210.52 L46 212.12 L42 210.52Z" fill="#1f7fc6"/><path d="M42 206.12 L46 207.52 L50 206.12 M46 207.52 V212.12" stroke="#7fc0ea" stroke-width="0.6" fill="none"/>
<rect x="32.5" y="214.96" width="6.5" height="6.5" fill="#fff" stroke="#666" stroke-width="0.8"/><path d="M34 218.26 L35.6 219.96 L38.3 216.16" stroke="#d9452b" stroke-width="1" fill="none"/>
<path d="M42 215.76 L46 214.16 L50 215.76 L50 220.16 L46 221.76 L42 220.16Z" fill="#1f7fc6"/><path d="M42 215.76 L46 217.16 L50 215.76 M46 217.16 V221.76" stroke="#7fc0ea" stroke-width="0.6" fill="none"/>
<rect x="32.5" y="224.60" width="6.5" height="6.5" fill="#fff" stroke="#666" stroke-width="0.8"/><path d="M34 227.90 L35.6 229.60 L38.3 225.80" stroke="#d9452b" stroke-width="1" fill="none"/>
<path d="M42 225.40 L46 223.80 L50 225.40 L50 229.80 L46 231.40 L42 229.80Z" fill="#1f7fc6"/><path d="M42 225.40 L46 226.80 L50 225.40 M46 226.80 V231.40" stroke="#7fc0ea" stroke-width="0.6" fill="none"/>
<rect x="32.5" y="234.24" width="6.5" height="6.5" fill="#fff" stroke="#666" stroke-width="0.8"/><path d="M34 237.54 L35.6 239.24 L38.3 235.44" stroke="#d9452b" stroke-width="1" fill="none"/>
<path d="M42 235.04 L46 233.44 L50 235.04 L50 239.44 L46 241.04 L42 239.44Z" fill="#1f7fc6"/><path d="M42 235.04 L46 236.44 L50 235.04 M46 236.44 V241.04" stroke="#7fc0ea" stroke-width="0.6" fill="none"/>
<rect x="32.5" y="243.88" width="6.5" height="6.5" fill="#fff" stroke="#666" stroke-width="0.8"/><path d="M34 247.18 L35.6 248.88 L38.3 245.08" stroke="#d9452b" stroke-width="1" fill="none"/>
<path d="M42 244.68 L46 243.08 L50 244.68 L50 249.08 L46 250.68 L42 249.08Z" fill="#1f7fc6"/><path d="M42 244.68 L46 246.08 L50 244.68 M46 246.08 V250.68" stroke="#7fc0ea" stroke-width="0.6" fill="none"/>
<rect x="32.5" y="253.52" width="6.5" height="6.5" fill="#fff" stroke="#666" stroke-width="0.8"/><path d="M34 256.82 L35.6 258.52 L38.3 254.72" stroke="#d9452b" stroke-width="1" fill="none"/>
<path d="M42 254.32 L46 252.72 L50 254.32 L50 258.72 L46 260.32 L42 258.72Z" fill="#1f7fc6"/><path d="M42 254.32 L46 255.72 L50 254.32 M46 255.72 V260.32" stroke="#7fc0ea" stroke-width="0.6" fill="none"/>
<rect x="32.5" y="263.16" width="6.5" height="6.5" fill="#fff" stroke="#666" stroke-width="0.8"/><path d="M34 266.46 L35.6 268.16 L38.3 264.36" stroke="#d9452b" stroke-width="1" fill="none"/>
<path d="M42 263.96 L46 262.36 L50 263.96 L50 268.36 L46 269.96 L42 268.36Z" fill="#1f7fc6"/><path d="M42 263.96 L46 265.36 L50 263.96 M46 265.36 V269.96" stroke="#7fc0ea" stroke-width="0.6" fill="none"/>
<rect x="32.5" y="272.80" width="6.5" height="6.5" fill="#fff" stroke="#666" stroke-width="0.8"/><path d="M34 276.10 L35.6 277.80 L38.3 274.00" stroke="#d9452b" stroke-width="1" fill="none"/>
<path d="M42 273.60 L46 272.00 L50 273.60 L50 278.00 L46 279.60 L42 278.00Z" fill="#1f7fc6"/><path d="M42 273.60 L46 275.00 L50 273.60 M46 275.00 V279.60" stroke="#7fc0ea" stroke-width="0.6" fill="none"/>
<rect x="32.5" y="282.44" width="6.5" height="6.5" fill="#fff" stroke="#666" stroke-width="0.8"/><path d="M34 285.74 L35.6 287.44 L38.3 283.64" stroke="#d9452b" stroke-width="1" fill="none"/>
<path d="M42 283.24 L46 281.64 L50 283.24 L50 287.64 L46 289.24 L42 287.64Z" fill="#1f7fc6"/><path d="M42 283.24 L46 284.64 L50 283.24 M46 284.64 V289.24" stroke="#7fc0ea" stroke-width="0.6" fill="none"/>
<rect x="32.5" y="292.08" width="6.5" height="6.5" fill="#fff" stroke="#666" stroke-width="0.8"/><path d="M34 295.38 L35.6 297.08 L38.3 293.28" stroke="#d9452b" stroke-width="1" fill="none"/>
<path d="M42 292.88 L46 291.28 L50 292.88 L50 297.28 L46 298.88 L42 297.28Z" fill="#1f7fc6"/><path d="M42 292.88 L46 294.28 L50 292.88 M46 294.28 V298.88" stroke="#7fc0ea" stroke-width="0.6" fill="none"/>
<rect x="32.5" y="301.72" width="6.5" height="6.5" fill="#fff" stroke="#666" stroke-width="0.8"/><path d="M34 305.02 L35.6 306.72 L38.3 302.92" stroke="#d9452b" stroke-width="1" fill="none"/>
<path d="M42 302.52 L46 300.92 L50 302.52 L50 306.92 L46 308.52 L42 306.92Z" fill="#1f7fc6"/><path d="M42 302.52 L46 303.92 L50 302.52 M46 303.92 V308.52" stroke="#7fc0ea" stroke-width="0.6" fill="none"/>
<rect x="32.5" y="311.36" width="6.5" height="6.5" fill="#fff" stroke="#666" stroke-width="0.8"/><path d="M34 314.66 L35.6 316.36 L38.3 312.56" stroke="#d9452b" stroke-width="1" fill="none"/>
<path d="M42 312.16 L46 310.56 L50 312.16 L50 316.56 L46 318.16 L42 316.56Z" fill="#1f7fc6"/><path d="M42 312.16 L46 313.56 L50 312.16 M46 313.56 V318.16" stroke="#7fc0ea" stroke-width="0.6" fill="none"/>
<rect x="32.5" y="321.00" width="6.5" height="6.5" fill="#fff" stroke="#666" stroke-width="0.8"/><path d="M34 324.30 L35.6 326.00 L38.3 322.20" stroke="#d9452b" stroke-width="1" fill="none"/>
<path d="M42 321.80 L46 320.20 L50 321.80 L50 326.20 L46 327.80 L42 326.20Z" fill="#1f7fc6"/><path d="M42 321.80 L46 323.20 L50 321.80 M46 323.20 V327.80" stroke="#7fc0ea" stroke-width="0.6" fill="none"/>
<rect x="32.5" y="330.64" width="6.5" height="6.5" fill="#fff" stroke="#666" stroke-width="0.8"/><path d="M34 333.94 L35.6 335.64 L38.3 331.84" stroke="#d9452b" stroke-width="1" fill="none"/>
<path d="M42 331.44 L46 329.84 L50 331.44 L50 335.84 L46 337.44 L42 335.84Z" fill="#1f7fc6"/><path d="M42 331.44 L46 332.84 L50 331.44 M46 332.84 V337.44" stroke="#7fc0ea" stroke-width="0.6" fill="none"/>
<rect x="32.5" y="340.28" width="6.5" height="6.5" fill="#fff" stroke="#666" stroke-width="0.8"/><path d="M34 343.58 L35.6 345.28 L38.3 341.48" stroke="#d9452b" stroke-width="1" fill="none"/>
<path d="M42 341.08 L46 339.48 L50 341.08 L50 345.48 L46 347.08 L42 345.48Z" fill="#1f7fc6"/><path d="M42 341.08 L46 342.48 L50 341.08 M46 342.48 V347.08" stroke="#7fc0ea" stroke-width="0.6" fill="none"/>
<rect x="32.5" y="349.92" width="6.5" height="6.5" fill="#fff" stroke="#666" stroke-width="0.8"/><path d="M34 353.22 L35.6 354.92 L38.3 351.12" stroke="#d9452b" stroke-width="1" fill="none"/>
<path d="M42 350.72 L46 349.12 L50 350.72 L50 355.12 L46 356.72 L42 355.12Z" fill="#1f7fc6"/><path d="M42 350.72 L46 352.12 L50 350.72 M46 352.12 V356.72" stroke="#7fc0ea" stroke-width="0.6" fill="none"/>
<rect x="32.5" y="359.56" width="6.5" height="6.5" fill="#fff" stroke="#666" stroke-width="0.8"/><path d="M34 362.86 L35.6 364.56 L38.3 360.76" stroke="#d9452b" stroke-width="1" fill="none"/>
<path d="M42 360.36 L46 358.76 L50 360.36 L50 364.76 L46 366.36 L42 364.76Z" fill="#1f7fc6"/><path d="M42 360.36 L46 361.76 L50 360.36 M46 361.76 V366.36" stroke="#7fc0ea" stroke-width="0.6" fill="none"/>
<rect x="32.5" y="369.20" width="6.5" height="6.5" fill="#fff" stroke="#666" stroke-width="0.8"/><path d="M34 372.50 L35.6 374.20 L38.3 370.40" stroke="#d9452b" stroke-width="1" fill="none"/>
<path d="M42 370.00 L46 368.40 L50 370.00 L50 374.40 L46 376.00 L42 374.40Z" fill="#1f7fc6"/><path d="M42 370.00 L46 371.40 L50 370.00 M46 371.40 V376.00" stroke="#7fc0ea" stroke-width="0.6" fill="none"/>
</svg>
<div class="a" style="left:15px;top:528px;width:173px;height:9px;background:#ebebeb"></div>
<div class="a" style="left:25px;top:529px;width:114px;height:7px;background:#f8f8f8;border:1px solid #c4c4c4;border-radius:2px"></div>
<svg class="a" style="left:15px;top:528px" width="173" height="9"><path d="M4.5 2.5 V6.5 L2 4.5Z" fill="#333"/><path d="M168 2.5 V6.5 L170.5 4.5Z" fill="#333"/><path d="M66 3 V6 M67.5 3 V6 M69 3 V6" stroke="#aaa" stroke-width="0.6"/></svg>
<div class="a" style="left:191px;top:88px;width:833px;height:12px;background:#e8e8e8"></div>
<div class="a" style="left:191px;top:89.5px;width:116px;height:10.5px;background:#fbfbfb;border-right:1px solid #dadada;border-top:1px solid #e2e2e2"></div>
<div class="t" id="tx104" style="left:199px;top:91.5px;font-size:7px;color:#222;line-height:8.4px;transform:scaleX(0.962);transform-origin:0 0;-webkit-text-stroke:0.1px #222;">&#10010; *铣削人头像_3.Z3 - [Default] &#10005;</div>
<div class="t" style="left:310px;top:90px;font-size:8px;color:#aaa;line-height:8px">+</div>
<div class="a" style="left:191px;top:100px;width:723px;height:437px;border-top:1px solid #dcdcdc;background:linear-gradient(180deg,#fcfcfc 0%,#f5f5f5 12%,#ececec 29.7%,#e0e0e0 43.5%,#d6d6d6 59.5%,#cdcdcd 73%,#c2c2c2 80%,#a6a6a6 100%)"></div>
<div class="a" style="left:914px;top:88px;width:110px;height:12px;background:#e8e8e8"></div>
<div class="a" style="left:914px;top:100px;width:4px;height:437px;background:#e6e6e6"></div>
<div class="a" style="left:918px;top:100px;width:106px;height:437px;background:#fdfdfd"></div>
<div class="t" id="tx105" style="left:1013px;top:104px;font-size:7px;color:#222;line-height:8.4px;">开.</div>
<svg class="a" style="left:1014px;top:90px" width="10" height="9"><path d="M2 1.5 L8 7.5 M8 1.5 L2 7.5" stroke="#bbb" stroke-width="1"/></svg>
<div class="t" id="tx106" style="left:203px;top:103.5px;font-size:6px;color:#333;line-height:7.2px;transform:scaleX(1.145);transform-origin:0 0;">&lt;单击右键&gt;环境相关选项.</div>
<div class="t" id="tx107" style="left:203px;top:111.5px;font-size:6px;color:#333;line-height:7.2px;transform:scaleX(1.021);transform-origin:0 0;">&lt;Shift + 鼠标右键&gt;显示选择过滤器.</div>
<div class="t" id="tx108" style="left:192.5px;top:526px;font-size:9.5px;color:#1a1a1a;line-height:11.4px;transform:scaleX(1.020);transform-origin:0 0;-webkit-text-stroke:0.05px #111;">2546.74mm</div>
<div class="a" style="left:651px;top:104px;width:62px;height:10px;background:#fafafa;border:1px solid #d4d4d4"></div>
<div class="t" id="tx109" style="left:673px;top:105.5px;font-size:6px;color:#222;line-height:7.2px;transform:scaleX(1.080);transform-origin:0 0;">图层0000</div>
<svg class="a" style="left:0;top:0" width="1024" height="553" viewBox="0 0 1024 553">
<g>
<rect x="396" y="105" width="6" height="7" fill="#fff" stroke="#999" stroke-width="0.6"/><path d="M394 108.5 H400" stroke="#d44" stroke-width="1"/>
<rect x="409" y="104.5" width="7" height="8" fill="#6aa6d8"/><rect x="411" y="108" width="5" height="4" fill="#8fc48f"/><path d="M419 107.5 H422 L420.5 109.5Z" fill="#333"/>
<path d="M430 111 L434 106" stroke="#d66" stroke-width="1.2"/><circle cx="434" cy="106" r="1.2" fill="#555"/>
<path d="M443 106 L447 104 L451 106 L451 111 L447 113 L443 111Z" fill="#f2b233"/><path d="M443 106 L447 108 L451 106" stroke="#2b6fa8" stroke-width="1.2" fill="none"/><path d="M447 108 V113" stroke="#2b6fa8" stroke-width="1.2"/>
<path d="M456 106 L460 104 L464 106 L464 111 L460 113 L456 111Z" fill="#2b7ec2"/><path d="M456 106 L460 108 L464 106 M460 108 V113" stroke="#8cc4ee" stroke-width="0.6" fill="none"/><path d="M466 107.5 H469 L467.5 109.5Z" fill="#333"/>
<circle cx="476" cy="108.5" r="3.5" fill="#f3f3f3" stroke="#aaa" stroke-width="0.7"/><path d="M480 107.5 H483 L481.5 109.5Z" fill="#333"/>
<path d="M494 106 L498 104 L502 106 L502 111 L498 113 L494 111Z" fill="#2b6fa8"/><path d="M494 108 L498 110 L502 108 L502 111 L498 113 L494 111Z" fill="#f2b233"/><path d="M504 107.5 H507 L505.5 109.5Z" fill="#333"/>
<rect x="514" y="104.5" width="8" height="8" fill="#c9a88a" stroke="#8aa" stroke-width="0.6"/><rect x="516" y="106.5" width="4" height="4" fill="#6a9ac8"/><path d="M525 107.5 H528 L526.5 109.5Z" fill="#333"/>
<path d="M536 108.5 L539 105.5 L542 108.5 L539 111.5Z" fill="#e9b2a2" stroke="#c77" stroke-width="0.6"/><path d="M545 107.5 H548 L546.5 109.5Z" fill="#333"/>
<rect x="554" y="105" width="8" height="7" fill="#f4f4f4" stroke="#aaa" stroke-width="0.6"/><rect x="556" y="109" width="2" height="2" fill="#555"/>
<path d="M569 104.5 V112 H577 V104.5" stroke="#2b6fa8" stroke-width="1" fill="none"/><path d="M569 106 H577" stroke="#e05" stroke-width="0.6"/><path d="M580 107.5 H583 L581.5 109.5Z" fill="#333"/>
<path d="M588 105 Q592 103 596 105 L596 111 Q592 113 588 111Z" fill="#777"/><path d="M599 107.5 H602 L600.5 109.5Z" fill="#333"/>
<rect x="607" y="107.5" width="9" height="2" fill="#111"/>
<rect x="620" y="104.5" width="8" height="8" fill="#e9f2fa" stroke="#777" stroke-width="0.8"/>
<path d="M633 107 L638 105 L643 107 L638 110Z" fill="#8fc6ee"/><path d="M633 108 L638 111 L643 108" stroke="#4a90c8" stroke-width="0.8" fill="none"/><path d="M645 107.5 H648 L646.5 109.5Z" fill="#333"/>
<path d="M656 105 Q658 103.5 660 105 L659 108 H657Z" fill="none" stroke="#888" stroke-width="0.7"/><rect x="657" y="109" width="2" height="1.5" fill="#888"/>
<circle cx="667" cy="108.5" r="3.2" fill="#f2c233" stroke="#b08a20" stroke-width="0.6"/>
<path d="M706 108 H710 L708 110Z" fill="#333"/>
</g>
<path d="M300 412 L401 412 L401 488 L411 493 L401 496.5 L300 497 L287 489 L287 466.8 L272 466.8 L272 442.8 L282 442.8 L282 437.6 L289 437.6 L289 427.3 L285.6 427.3 L285.6 422.2 L300 422Z" fill="#050505"/>
<path d="M299 426 L306 425 L305 433 L299 433Z" fill="#f0f0f0" opacity="0.6"/>
<path d="M352 420 V490" stroke="#2c2c2c" stroke-width="0.7"/>
<path d="M398 491 L411 493.5 L401 495Z" fill="#e5692a"/>
<path d="M341 349 L367 349 L367 376 L338 376 L338 356Z" fill="#080808"/>
<path d="M297 390 L318 387.5 Q338 362 370 348 L411 327 L412 389 L406 403 L407.7 407.4 Q352 416 297 409Z" fill="#d46904"/>
<path d="M317 388 Q312 400 320 410 Q352 414 406 409 L406 403 Q350 408 317 388Z" fill="#bb5b06" opacity="0.3"/>
<path d="M345 382 V398 M359 382 V398" stroke="#bb5b06" stroke-width="0.8"/>
<path d="M370 350 Q382 380 386 404" stroke="#bb5b06" stroke-width="1" fill="none" opacity="0.5"/>
<ellipse cx="412" cy="358" rx="33.5" ry="31" fill="#d46904"/>
<path d="M420 328 Q446 338 445.5 360 Q444 380 424 390 Q438 370 420 328Z" fill="#bb5b06" opacity="0.7"/>
<path d="M411 389.5 L425.6 394 L413.7 395.5Z" fill="#d46904"/>
<path d="M312 237 Q318 244 322 247 Q328 252 332 258 L344 281 L355 307 L366.5 336 L370 348 L417 320 L424 330 L416 321 L401 298 L387 269 L377 246 Q360 232 340 226Z" fill="#d46904"/>
<path d="M360 238 Q372 244 377 248 L400 298 L415 322 L404 326 L385 294 L364 250Z" fill="#bb5b06" opacity="0.22"/>
<path d="M313 186 L319 184 L434 186.5 L436 188.5 L461 187.5 L469 183.7 L496 182 L502.4 185.8 L505.7 196.7 L512.2 208.6 L502.4 224.9 L496 223.3 L436 220.5 L420 218.4 L401 226 L386 236 L377 246 L356 236 L332 258 L322 247 L313 237Z" fill="#d46904"/>
<path d="M313 186 L319 184 L434 186.5 L436 188.5 L461 187.5 L469 183.7 L496 182 L502.4 185.8 L504 192 L470 193 L436 196 L313 195Z" fill="#e47306" opacity="0.8"/>
<path d="M434 187 L434 219" stroke="#bb5b06" stroke-width="1"/>
<ellipse cx="476" cy="191.5" rx="10" ry="6" fill="#bb5b06" opacity="0.55"/>
<path d="M318 184 L322 190 L330 185Z" fill="#bb5b06"/><path d="M385 185 L389 190 L395 186Z" fill="#bb5b06"/>
<path d="M336 207 Q350 199 365 215" stroke="#e47306" stroke-width="1.2" fill="none" opacity="0.9"/>
<path d="M362 216 Q373 230 372 252 L366 254 Q368 234 358 219Z" fill="#bb5b06" opacity="0.85"/>
<path d="M377 212 L382 226 M384 214 L388 227" stroke="#bb5b06" stroke-width="1.2" opacity="0.6"/>
<path d="M374 213 Q380 220 378 230" stroke="#bb5b06" stroke-width="1" fill="none" opacity="0.6"/>
<path d="M283 183 L292 183 L292 187.5 L313 187.5 L313 213 L282 213 Q281 200 283 188Z" fill="#060606"/>
<path d="M282 215 L313 215 L313 237 L283 237 Q281 226 282 215Z" fill="#060606"/>
<text x="437.5" y="219.8" font-family="Liberation Sans" font-size="18" font-weight="bold" fill="#150f0f" stroke="#150f0f" stroke-width="0.9" transform="translate(437.5 219.8) scale(0.56 0.98) translate(-437.5 -219.8)">K</text>
<text x="447.6" y="219.8" font-family="Liberation Sans" font-size="18" font-weight="bold" fill="#150f0f" stroke="#150f0f" stroke-width="0.9" transform="translate(447.6 219.8) scale(0.56 0.98) translate(-447.6 -219.8)">U</text>
<text x="457.7" y="219.8" font-family="Liberation Sans" font-size="18" font-weight="bold" fill="#150f0f" stroke="#150f0f" stroke-width="0.9" transform="translate(457.7 219.8) scale(0.56 0.98) translate(-457.7 -219.8)">K</text>
<text x="467.8" y="219.8" font-family="Liberation Sans" font-size="18" font-weight="bold" fill="#150f0f" stroke="#150f0f" stroke-width="0.9" transform="translate(467.8 219.8) scale(0.56 0.98) translate(-467.8 -219.8)">A</text>
<path d="M512 211 L520 219 L502 230 L497 225Z" fill="#0a0a0a"/>
<path d="M503.9 231 L519 219 L527 231.8 L529.5 237.6 L499.5 237Z" fill="#525252"/>
<path d="M493.7 238 Q494 235.5 497 235.5 L533 235.5 Q536.4 235.5 536.4 239 L536.4 268 L530.6 275 L500 275 L493.7 268Z" fill="#555555"/>
<rect x="497" y="237.5" width="36" height="6" fill="#5f5f5f"/><path d="M500 248 H534" stroke="#5c5c5c" stroke-width="1"/><path d="M500 262 H534" stroke="#424242" stroke-width="0.8"/>
<rect x="487.2" y="250" width="7" height="8" rx="2" fill="#555"/>
<rect x="536" y="244.5" width="11" height="14" rx="2" fill="#575757"/><rect x="546" y="242" width="5" height="19" rx="1.5" fill="#4f4f4f"/>
<path d="M550 252 L607.5 248.8" stroke="#2e2e2e" stroke-width="2.2"/>
<path d="M583 467 L594.2 467 L597 408 Q599 388 614 382 L645 382 Q660 388 662 408 L664.8 467 L672 467 L679.5 506 L575.5 506Z" fill="#eeeeee" stroke="#cbcbcb" stroke-width="0.8"/>
<path d="M597 412 L594.2 467 L664.8 467 L662 412 Q650 422 629 422 Q608 422 597 412Z" fill="#f3f3f3"/>
<path d="M588 483 L667 483 L669 501 L586 501Z" fill="#f5f5f5" stroke="#d6d6d6" stroke-width="0.6"/>
<path d="M583 467 H672" stroke="#d4d4d4" stroke-width="0.8"/>
<rect x="617.2" y="456" width="21.5" height="15.5" fill="#d6d6d6"/>
<ellipse cx="629" cy="413" rx="31.5" ry="27" fill="#d46904"/>
<path d="M603.4 372 L657.1 372 L657.1 438.7 L603.4 438.7Z" fill="#e47306"/>
<path d="M609 392 L613 392 L613 438 L609 438Z" fill="#bb5b06" opacity="0.55"/><path d="M646 392 L650 392 L650 438 L646 438Z" fill="#bb5b06" opacity="0.55"/>
<path d="M590.2 354 Q590.2 350 596 350 Q630 347 663 350 Q669.4 350 669.4 354 L669.4 372 Q669.4 376 663 376 L596 376 Q590.2 376 590.2 372Z" fill="#060606"/>
<path d="M606.8 331 L640.8 329.5 L640 355 L606.8 355Z" fill="#6c886e"/>
<path d="M607 331 L612 322 L614 312 L609 300 L604.5 291 L607 279 L604.5 264 L606.5 249 Q612 236 628 234 Q645 233 654 243 Q660 250 659 258 L657.5 268 L659.5 276 L655 281 L653 289 L646 296 L637 305 L642 317 L645.5 327 L641 330.5Z" fill="#6e8a70"/>
<path d="M609 329 L641 327.5" stroke="#8c9f8d" stroke-width="1.2" opacity="0.7"/>
<path d="M641 246 Q652 254 650 268 Q648 284 643 292 Q646 270 641 246Z" fill="#5f7a62" opacity="0.5"/>
<path d="M610 292 Q618 296 621 306" stroke="#8a9c8b" stroke-width="1.5" fill="none" opacity="0.6"/>
<path d="M620 250 Q630 246 640 250" stroke="#7f9a80" stroke-width="2" fill="none" opacity="0.4"/>
<circle cx="631" cy="244" r="0.8" fill="#7fe07f"/>
<path d="M242 477 V445" stroke="#2a78be" stroke-width="1.2"/><path d="M240 448.5 L242 443 L244 448.5Z" fill="#2a78be"/>
<text x="239" y="440" font-family="Liberation Sans" font-size="8.5" fill="#2a78be" stroke="#2a78be" stroke-width="0.3">Z</text>
<path d="M242 479 H280" stroke="#e5692a" stroke-width="1.2"/><path d="M278 477 L284.5 479 L278 481Z" fill="#e5692a"/>
<text x="284.5" y="482.5" font-family="Liberation Sans" font-size="8" fill="#e5692a" stroke="#e5692a" stroke-width="0.2">X</text>
<path d="M273 492 H306" stroke="#e5692a" stroke-width="1"/><ellipse cx="275" cy="492" rx="2.8" ry="1.4" fill="#e5692a"/>
<text x="257" y="495.5" font-family="Liberation Sans" font-size="8" fill="#e5692a" stroke="#e5692a" stroke-width="0.2">Y</text>
<circle cx="242" cy="478" r="1.2" fill="#5aa05a"/>
</svg>
<div class="a" style="left:0;top:537px;width:1024px;height:16px;background:#ececec"></div>
<div class="t" id="tx110" style="left:1px;top:542px;font-size:6.5px;color:#333;line-height:7.8px;transform:scaleX(0.918);transform-origin:0 0;-webkit-text-stroke:0.1px #333;">选择命令或实体</div>
<div class="a" style="left:783px;top:539px;width:1px;height:13px;background:#d0d0d0"></div>
<div class="a" style="left:791px;top:540px;width:11px;height:11px;background:#f9dd8f;border:1px solid #e5b766"></div>
<div class="a" style="left:822px;top:540px;width:11px;height:11px;background:#f9dd8f;border:1px solid #e5b766"></div>
<svg class="a" style="left:790px;top:539px" width="46" height="13"><rect x="3.5" y="3" width="6" height="6" fill="#fff" stroke="#777" stroke-width="0.6"/><path d="M6.5 3 V9" stroke="#777" stroke-width="0.6"/><rect x="17" y="3" width="9" height="5" fill="#2d86d2"/><rect x="19" y="8" width="5" height="1.5" fill="#555"/><rect x="34.5" y="3" width="7" height="6" fill="#fff" stroke="#888" stroke-width="0.6"/><rect x="34.5" y="3" width="7" height="2" fill="#999"/></svg>
<div class="a" style="left:838px;top:540px;width:186px;height:12px;background:#fff;border:1px solid #dcdcdc"></div>
<div class="a" style="left:786px;top:81px;width:232px;height:444px;background:rgba(0,0,0,0.10);filter:blur(2px)"></div>
<div class="a" style="left:784px;top:79px;width:231px;height:442px;background:#e1e4e9;border:1px solid #8f8f8f"></div>
<div class="a" style="left:785px;top:80px;width:229px;height:16px;background:#fdfdfd"></div>
<svg class="a" style="left:788px;top:82px" width="12" height="12"><path d="M1 1.5 L10 1.5 L10 6 L5.5 10.5 L1 6Z" fill="#1d5f9b"/><path d="M3 3 L8 3 L7 6 L4 6Z" fill="#cfe0ee"/><circle cx="5.5" cy="7.5" r="1.5" fill="#2d86d2"/></svg>
<div class="t" id="tx111" style="left:800px;top:83.5px;font-size:6.5px;color:#222;line-height:7.8px;transform:scaleX(0.886);transform-origin:0 0;">机器人示教</div>
<div class="t" id="tx112" style="left:975.5px;top:83px;font-size:8px;color:#444;line-height:9.6px;font-weight:bold;">?</div>
<svg class="a" style="left:997px;top:83px" width="10" height="9"><path d="M1.5 1 L8.5 8 M8.5 1 L1.5 8" stroke="#333" stroke-width="1"/></svg>
<div class="t" id="tx113" style="left:793px;top:104px;font-size:6.5px;color:#333;line-height:7.8px;transform:scaleX(0.914);transform-origin:0 0;">机器人名称</div>
<div class="a" style="left:850px;top:101px;width:154px;height:11px;background:#efefef;border:1px solid #dadada"></div>
<div class="t" id="tx114" style="left:851.5px;top:104.3px;font-size:6.5px;color:#222;line-height:7.8px;transform:scaleX(0.882);transform-origin:0 0;-webkit-text-stroke:0.1px #222;">KR60 HA_0</div>
<div class="a" style="left:791px;top:117px;width:217px;height:11px;background:#fbfbfb;border:1px solid #e6e6e6"></div>
<svg class="a" style="left:792px;top:120px" width="6" height="5"><path d="M0.5 0.5 H5.5 L3 4.5Z" fill="#222"/></svg>
<div class="t" id="tx115" style="left:800px;top:118.5px;font-size:6.5px;color:#222;line-height:7.8px;transform:scaleX(0.929);transform-origin:0 0;">直角空间</div>
<div class="a" style="left:791px;top:129px;width:217px;height:112px;background:#dde1e7;border:1px solid #ccd1d8"></div>
<div class="a" style="left:791px;top:246px;width:217px;height:11px;background:#fbfbfb;border:1px solid #e6e6e6"></div>
<svg class="a" style="left:792px;top:249px" width="6" height="5"><path d="M0.5 0.5 H5.5 L3 4.5Z" fill="#222"/></svg>
<div class="t" id="tx116" style="left:800px;top:247.5px;font-size:6.5px;color:#222;line-height:7.8px;transform:scaleX(0.929);transform-origin:0 0;">关节空间</div>
<div class="a" style="left:791px;top:258px;width:217px;height:114px;background:#dde1e7;border:1px solid #ccd1d8"></div>
<div class="a" style="left:791px;top:375px;width:217px;height:11px;background:#fbfbfb;border:1px solid #e6e6e6"></div>
<svg class="a" style="left:792px;top:378px" width="6" height="5"><path d="M0.5 0.5 H5.5 L3 4.5Z" fill="#222"/></svg>
<div class="t" id="tx117" style="left:800px;top:376.5px;font-size:6.5px;color:#222;line-height:7.8px;transform:scaleX(0.929);transform-origin:0 0;">示教编程</div>
<div class="a" style="left:791px;top:387px;width:217px;height:133px;background:#dde1e7;border:1px solid #ccd1d8"></div>
<svg class="a" style="left:795px;top:136px" width="90" height="10"><circle cx="5" cy="5" r="3" fill="#fff" stroke="#aaa" stroke-width="0.7"/><circle cx="5" cy="5" r="1.6" fill="#e5782a"/><circle cx="39" cy="5" r="3" fill="#fff" stroke="#aaa" stroke-width="0.7"/><circle cx="81" cy="5" r="3" fill="#fff" stroke="#aaa" stroke-width="0.7"/></svg>
<div class="t" id="tx118" style="left:806px;top:137px;font-size:6.5px;color:#222;line-height:7.8px;transform:scaleX(0.929);transform-origin:0 0;">基座标</div>
<div class="t" id="tx119" style="left:841px;top:137px;font-size:6.5px;color:#222;line-height:7.8px;transform:scaleX(0.911);transform-origin:0 0;">工具坐标</div>
<div class="t" id="tx120" style="left:882px;top:137px;font-size:6.5px;color:#222;line-height:7.8px;transform:scaleX(0.957);transform-origin:0 0;-webkit-text-stroke:0.1px #222;">User coordinate</div>
<div class="a" style="left:797px;top:152px;width:184px;height:11px;background:#fafafa;border:1px solid #d8d8d8"></div>
<svg class="a" style="left:975px;top:156px" width="5" height="3"><path d="M0 0 H4 L2 2.5Z" fill="#222"/></svg>
<div class="a" style="left:986px;top:150px;width:15px;height:15px;background:#fafafa;border:1px solid #dcdcdc"></div>
<svg class="a" style="left:986px;top:150px" width="15" height="15"><path d="M7.5 2.5 V12.5 M2.5 7.5 H12.5" stroke="#2e7d32" stroke-width="2"/></svg>
<div class="t" id="tx121" style="left:796px;top:171px;font-size:6.5px;color:#333;line-height:7.8px;transform:scaleX(1.000);transform-origin:0 0;">线性步进量[mm]</div>
<div class="t" id="tx122" style="left:906px;top:171px;font-size:6.5px;color:#333;line-height:7.8px;transform:scaleX(1.000);transform-origin:0 0;">角步进量[deg]</div>
<div class="a" style="left:797px;top:182px;width:101px;height:10px;background:#fcfcfc;border:1px solid #dcdcdc"></div>
<div class="t" id="tx123" style="left:799px;top:183.3px;font-size:6.5px;color:#222;line-height:7.8px;-webkit-text-stroke:0.1px #222;">10</div>
<svg class="a" style="left:893px;top:183px" width="4" height="8"><path d="M0.5 2.5 L2 0.5 L3.5 2.5Z M0.5 5.5 L2 7.5 L3.5 5.5Z" fill="#333"/></svg>
<div class="a" style="left:907px;top:182px;width:94px;height:10px;background:#fcfcfc;border:1px solid #dcdcdc"></div>
<div class="t" id="tx124" style="left:909px;top:183.3px;font-size:6.5px;color:#222;line-height:7.8px;-webkit-text-stroke:0.1px #222;">1</div>
<svg class="a" style="left:996px;top:183px" width="4" height="8"><path d="M0.5 2.5 L2 0.5 L3.5 2.5Z M0.5 5.5 L2 7.5 L3.5 5.5Z" fill="#333"/></svg>
<div class="a" style="left:797px;top:195.0px;width:18px;height:11px;background:#fafafa;border:1px solid #e0e0e0"></div>
<div class="t" id="tx125" style="left:806px;top:196.2px;font-size:8.5px;color:#b8472a;line-height:9px;font-weight:bold;transform:translateX(-50%) scaleX(1.107);transform-origin:50% 0;"><span style='font-size:5px;vertical-align:1px'>&#9664;</span>X&#8211;</div>
<div class="a" style="left:823px;top:195.0px;width:18px;height:11px;background:#fafafa;border:1px solid #e0e0e0"></div>
<div class="t" id="tx126" style="left:832px;top:196.2px;font-size:8.5px;color:#b8472a;line-height:9px;font-weight:bold;transform:translateX(-50%) scaleX(1.033);transform-origin:50% 0;">X+<span style='font-size:5px;vertical-align:1px'>&#9654;</span></div>
<div class="a" style="left:846px;top:195.0px;width:52px;height:11px;background:#fff;border:1px solid #dcdcdc"></div>
<div class="t" id="tx127" style="left:848px;top:197.2px;font-size:6.5px;color:#222;line-height:7.8px;-webkit-text-stroke:0.1px #222;">1.469</div>
<div class="a" style="left:907px;top:195.0px;width:18px;height:11px;background:#fafafa;border:1px solid #e0e0e0"></div>
<div class="t" id="tx128" style="left:916px;top:196.2px;font-size:8.5px;color:#b8472a;line-height:9px;font-weight:bold;transform:translateX(-50%) scaleX(1.000);transform-origin:50% 0;">RX&#8211;</div>
<div class="a" style="left:928px;top:195.0px;width:18px;height:11px;background:#fafafa;border:1px solid #e0e0e0"></div>
<div class="t" id="tx129" style="left:937px;top:196.2px;font-size:8.5px;color:#b8472a;line-height:9px;font-weight:bold;transform:translateX(-50%) scaleX(1.000);transform-origin:50% 0;">RX+</div>
<div class="a" style="left:949px;top:195.0px;width:52px;height:11px;background:#fff;border:1px solid #dcdcdc"></div>
<div class="t" id="tx130" style="left:951px;top:197.2px;font-size:6.5px;color:#222;line-height:7.8px;-webkit-text-stroke:0.1px #222;">-1.571</div>
<div class="a" style="left:797px;top:209.4px;width:18px;height:11px;background:#fafafa;border:1px solid #e0e0e0"></div>
<div class="t" id="tx131" style="left:806px;top:210.6px;font-size:8.5px;color:#3f6f3f;line-height:9px;font-weight:bold;transform:translateX(-50%) scaleX(1.107);transform-origin:50% 0;"><span style='font-size:5px;vertical-align:1px'>&#9664;</span>Y&#8211;</div>
<div class="a" style="left:823px;top:209.4px;width:18px;height:11px;background:#fafafa;border:1px solid #e0e0e0"></div>
<div class="t" id="tx132" style="left:832px;top:210.6px;font-size:8.5px;color:#3f6f3f;line-height:9px;font-weight:bold;transform:translateX(-50%) scaleX(1.033);transform-origin:50% 0;">Y+<span style='font-size:5px;vertical-align:1px'>&#9654;</span></div>
<div class="a" style="left:846px;top:209.4px;width:52px;height:11px;background:#fff;border:1px solid #dcdcdc"></div>
<div class="t" id="tx133" style="left:848px;top:211.6px;font-size:6.5px;color:#222;line-height:7.8px;-webkit-text-stroke:0.1px #222;">-0.029</div>
<div class="a" style="left:907px;top:209.4px;width:18px;height:11px;background:#fafafa;border:1px solid #e0e0e0"></div>
<div class="t" id="tx134" style="left:916px;top:210.6px;font-size:8.5px;color:#3f6f3f;line-height:9px;font-weight:bold;transform:translateX(-50%) scaleX(1.062);transform-origin:50% 0;">RY&#8211;</div>
<div class="a" style="left:928px;top:209.4px;width:18px;height:11px;background:#fafafa;border:1px solid #e0e0e0"></div>
<div class="t" id="tx135" style="left:937px;top:210.6px;font-size:8.5px;color:#3f6f3f;line-height:9px;font-weight:bold;transform:translateX(-50%) scaleX(1.062);transform-origin:50% 0;">RY+</div>
<div class="a" style="left:949px;top:209.4px;width:52px;height:11px;background:#fff;border:1px solid #dcdcdc"></div>
<div class="t" id="tx136" style="left:951px;top:211.6px;font-size:6.5px;color:#222;line-height:7.8px;-webkit-text-stroke:0.1px #222;">1.373</div>
<div class="a" style="left:797px;top:223.8px;width:18px;height:11px;background:#fafafa;border:1px solid #e0e0e0"></div>
<div class="t" id="tx137" style="left:806px;top:225.0px;font-size:8.5px;color:#2a78b0;line-height:9px;font-weight:bold;transform:translateX(-50%) scaleX(1.107);transform-origin:50% 0;"><span style='font-size:5px;vertical-align:1px'>&#9664;</span>Z&#8211;</div>
<div class="a" style="left:823px;top:223.8px;width:18px;height:11px;background:#fafafa;border:1px solid #e0e0e0"></div>
<div class="t" id="tx138" style="left:832px;top:225.0px;font-size:8.5px;color:#2a78b0;line-height:9px;font-weight:bold;transform:translateX(-50%) scaleX(1.107);transform-origin:50% 0;">Z+<span style='font-size:5px;vertical-align:1px'>&#9654;</span></div>
<div class="a" style="left:846px;top:223.8px;width:52px;height:11px;background:#fff;border:1px solid #dcdcdc"></div>
<div class="t" id="tx139" style="left:848px;top:226.0px;font-size:6.5px;color:#222;line-height:7.8px;-webkit-text-stroke:0.1px #222;">1.479</div>
<div class="a" style="left:907px;top:223.8px;width:18px;height:11px;background:#fafafa;border:1px solid #e0e0e0"></div>
<div class="t" id="tx140" style="left:916px;top:225.0px;font-size:8.5px;color:#2a78b0;line-height:9px;font-weight:bold;transform:translateX(-50%) scaleX(1.062);transform-origin:50% 0;">RZ&#8211;</div>
<div class="a" style="left:928px;top:223.8px;width:18px;height:11px;background:#fafafa;border:1px solid #e0e0e0"></div>
<div class="t" id="tx141" style="left:937px;top:225.0px;font-size:8.5px;color:#2a78b0;line-height:9px;font-weight:bold;transform:translateX(-50%) scaleX(1.062);transform-origin:50% 0;">RZ+</div>
<div class="a" style="left:949px;top:223.8px;width:52px;height:11px;background:#fff;border:1px solid #dcdcdc"></div>
<div class="t" id="tx142" style="left:951px;top:226.0px;font-size:6.5px;color:#222;line-height:7.8px;-webkit-text-stroke:0.1px #222;">-1.571</div>
<div class="t" id="tx143" style="left:794px;top:267.2px;font-size:6.5px;color:#333;line-height:7.8px;transform:scaleX(1.000);transform-origin:0 0;">Axis1[&#176;]</div>
<div class="a" style="left:819px;top:265.5px;width:31px;height:11px;background:#fff;border:1px solid #dcdcdc"></div>
<div class="t" id="tx144" style="left:821px;top:267.4px;font-size:6.5px;color:#222;line-height:7.8px;-webkit-text-stroke:0.1px #222;">12.432</div>
<div class="a" style="left:854px;top:265.5px;width:24px;height:11px;background:#ececec;border:1px solid #dedede"></div>
<div class="t" id="tx145" style="left:856px;top:267.4px;font-size:6.5px;color:#222;line-height:7.8px;-webkit-text-stroke:0.1px #222;">-185</div>
<div class="a" style="left:881px;top:270.2px;width:96px;height:2px;background:#b8b8b8;border-bottom:1px solid #eee"></div>
<div class="a" style="left:929.5px;top:266.5px;width:5px;height:9px;background:#f7f7f7;border:1px solid #9a9a9a;border-radius:1px"></div>
<div class="a" style="left:981px;top:265.5px;width:23px;height:11px;background:#ececec;border:1px solid #dedede"></div>
<div class="t" id="tx146" style="left:983px;top:267.4px;font-size:6.5px;color:#222;line-height:7.8px;-webkit-text-stroke:0.1px #222;">185</div>
<div class="t" id="tx147" style="left:794px;top:284.9px;font-size:6.5px;color:#333;line-height:7.8px;transform:scaleX(1.000);transform-origin:0 0;">Axis2[&#176;]</div>
<div class="a" style="left:819px;top:283.2px;width:31px;height:11px;background:#fff;border:1px solid #dcdcdc"></div>
<div class="t" id="tx148" style="left:821px;top:285.1px;font-size:6.5px;color:#222;line-height:7.8px;-webkit-text-stroke:0.1px #222;">-117.013</div>
<div class="a" style="left:854px;top:283.2px;width:24px;height:11px;background:#ececec;border:1px solid #dedede"></div>
<div class="t" id="tx149" style="left:856px;top:285.1px;font-size:6.5px;color:#222;line-height:7.8px;-webkit-text-stroke:0.1px #222;">-135</div>
<div class="a" style="left:881px;top:287.9px;width:96px;height:2px;background:#b8b8b8;border-bottom:1px solid #eee"></div>
<div class="a" style="left:891.5px;top:284.2px;width:5px;height:9px;background:#f7f7f7;border:1px solid #9a9a9a;border-radius:1px"></div>
<div class="a" style="left:981px;top:283.2px;width:23px;height:11px;background:#ececec;border:1px solid #dedede"></div>
<div class="t" id="tx150" style="left:983px;top:285.1px;font-size:6.5px;color:#222;line-height:7.8px;-webkit-text-stroke:0.1px #222;">35</div>
<div class="t" id="tx151" style="left:794px;top:302.6px;font-size:6.5px;color:#333;line-height:7.8px;transform:scaleX(1.000);transform-origin:0 0;">Axis3[&#176;]</div>
<div class="a" style="left:819px;top:300.9px;width:31px;height:11px;background:#fff;border:1px solid #dcdcdc"></div>
<div class="t" id="tx152" style="left:821px;top:302.8px;font-size:6.5px;color:#222;line-height:7.8px;-webkit-text-stroke:0.1px #222;">114.930</div>
<div class="a" style="left:854px;top:300.9px;width:24px;height:11px;background:#ececec;border:1px solid #dedede"></div>
<div class="t" id="tx153" style="left:856px;top:302.8px;font-size:6.5px;color:#222;line-height:7.8px;-webkit-text-stroke:0.1px #222;">-120</div>
<div class="a" style="left:881px;top:305.6px;width:96px;height:2px;background:#b8b8b8;border-bottom:1px solid #eee"></div>
<div class="a" style="left:958.0px;top:301.9px;width:5px;height:9px;background:#f7f7f7;border:1px solid #9a9a9a;border-radius:1px"></div>
<div class="a" style="left:981px;top:300.9px;width:23px;height:11px;background:#ececec;border:1px solid #dedede"></div>
<div class="t" id="tx154" style="left:983px;top:302.8px;font-size:6.5px;color:#222;line-height:7.8px;-webkit-text-stroke:0.1px #222;">158</div>
<div class="t" id="tx155" style="left:794px;top:320.3px;font-size:6.5px;color:#333;line-height:7.8px;transform:scaleX(1.000);transform-origin:0 0;">Axis4[&#176;]</div>
<div class="a" style="left:819px;top:318.6px;width:31px;height:11px;background:#fff;border:1px solid #dcdcdc"></div>
<div class="t" id="tx156" style="left:821px;top:320.5px;font-size:6.5px;color:#222;line-height:7.8px;-webkit-text-stroke:0.1px #222;">-23.340</div>
<div class="a" style="left:854px;top:318.6px;width:24px;height:11px;background:#ececec;border:1px solid #dedede"></div>
<div class="t" id="tx157" style="left:856px;top:320.5px;font-size:6.5px;color:#222;line-height:7.8px;-webkit-text-stroke:0.1px #222;">-350</div>
<div class="a" style="left:881px;top:323.3px;width:96px;height:2px;background:#b8b8b8;border-bottom:1px solid #eee"></div>
<div class="a" style="left:923.5px;top:319.6px;width:5px;height:9px;background:#f7f7f7;border:1px solid #9a9a9a;border-radius:1px"></div>
<div class="a" style="left:981px;top:318.6px;width:23px;height:11px;background:#ececec;border:1px solid #dedede"></div>
<div class="t" id="tx158" style="left:983px;top:320.5px;font-size:6.5px;color:#222;line-height:7.8px;-webkit-text-stroke:0.1px #222;">350</div>
<div class="t" id="tx159" style="left:794px;top:338.0px;font-size:6.5px;color:#333;line-height:7.8px;transform:scaleX(1.000);transform-origin:0 0;">Axis5[&#176;]</div>
<div class="a" style="left:819px;top:336.3px;width:31px;height:11px;background:#fff;border:1px solid #dcdcdc"></div>
<div class="t" id="tx160" style="left:821px;top:338.2px;font-size:6.5px;color:#222;line-height:7.8px;-webkit-text-stroke:0.1px #222;">49.044</div>
<div class="a" style="left:854px;top:336.3px;width:24px;height:11px;background:#ececec;border:1px solid #dedede"></div>
<div class="t" id="tx161" style="left:856px;top:338.2px;font-size:6.5px;color:#222;line-height:7.8px;-webkit-text-stroke:0.1px #222;">-119</div>
<div class="a" style="left:881px;top:341.0px;width:96px;height:2px;background:#b8b8b8;border-bottom:1px solid #eee"></div>
<div class="a" style="left:945.5px;top:337.3px;width:5px;height:9px;background:#f7f7f7;border:1px solid #9a9a9a;border-radius:1px"></div>
<div class="a" style="left:981px;top:336.3px;width:23px;height:11px;background:#ececec;border:1px solid #dedede"></div>
<div class="t" id="tx162" style="left:983px;top:338.2px;font-size:6.5px;color:#222;line-height:7.8px;-webkit-text-stroke:0.1px #222;">119</div>
<div class="t" id="tx163" style="left:794px;top:355.7px;font-size:6.5px;color:#333;line-height:7.8px;transform:scaleX(1.000);transform-origin:0 0;">Axis6[&#176;]</div>
<div class="a" style="left:819px;top:354.0px;width:31px;height:11px;background:#fff;border:1px solid #dcdcdc"></div>
<div class="t" id="tx164" style="left:821px;top:355.9px;font-size:6.5px;color:#222;line-height:7.8px;-webkit-text-stroke:0.1px #222;">-147.808</div>
<div class="a" style="left:854px;top:354.0px;width:24px;height:11px;background:#ececec;border:1px solid #dedede"></div>
<div class="t" id="tx165" style="left:856px;top:355.9px;font-size:6.5px;color:#222;line-height:7.8px;-webkit-text-stroke:0.1px #222;">-350</div>
<div class="a" style="left:881px;top:358.7px;width:96px;height:2px;background:#b8b8b8;border-bottom:1px solid #eee"></div>
<div class="a" style="left:908.5px;top:355.0px;width:5px;height:9px;background:#f7f7f7;border:1px solid #9a9a9a;border-radius:1px"></div>
<div class="a" style="left:981px;top:354.0px;width:23px;height:11px;background:#ececec;border:1px solid #dedede"></div>
<div class="t" id="tx166" style="left:983px;top:355.9px;font-size:6.5px;color:#222;line-height:7.8px;-webkit-text-stroke:0.1px #222;">350</div>
<div class="a" style="left:794px;top:390px;width:17px;height:17px;background:#f8f8f8;border:1px solid #e2e2e2"></div>
<div class="a" style="left:813px;top:390px;width:17px;height:17px;background:#f8f8f8;border:1px solid #e2e2e2"></div>
<div class="a" style="left:835px;top:390px;width:17px;height:17px;background:#f8f8f8;border:1px solid #e2e2e2"></div>
<div class="a" style="left:854px;top:390px;width:17px;height:17px;background:#f8f8f8;border:1px solid #e2e2e2"></div>
<div class="a" style="left:873px;top:390px;width:17px;height:17px;background:#f8f8f8;border:1px solid #e2e2e2"></div>
<div class="a" style="left:895px;top:390px;width:17px;height:17px;background:#f8f8f8;border:1px solid #e2e2e2"></div>
<div class="a" style="left:913px;top:390px;width:17px;height:17px;background:#f8f8f8;border:1px solid #e2e2e2"></div>
<div class="a" style="left:932px;top:390px;width:17px;height:17px;background:#f8f8f8;border:1px solid #e2e2e2"></div>
<div class="a" style="left:950px;top:390px;width:17px;height:17px;background:#f8f8f8;border:1px solid #e2e2e2"></div>
<div class="a" style="left:969px;top:390px;width:17px;height:17px;background:#f6dcc0;border:1px solid #e2e2e2"></div>
<div class="a" style="left:988px;top:390px;width:17px;height:17px;background:#f8f8f8;border:1px solid #e2e2e2"></div>
<svg class="a" style="left:790px;top:388px" width="220" height="22" viewBox="790 388 220 22">
<path d="M802.5 391.5 L805 394.5 L803.5 394.5 L803.5 397 L806 397 L806 395.5 L809 398 L806 400.5 L806 399 L803.5 399 L803.5 401.5 L805 401.5 L802.5 404.5 L800 401.5 L801.5 401.5 L801.5 399 L799 399 L799 400.5 L796 398 L799 395.5 L799 397 L801.5 397 L801.5 394.5 L800 394.5Z" fill="#2d86d2"/>
<path d="M821.5 391.5 V405 M815 398 H828" stroke="#c9542a" stroke-width="2"/><rect x="818" y="395" width="7" height="6" fill="none" stroke="#c9542a" stroke-width="1.3"/>
<path d="M839 403 Q842 397 844 399 Q847 401 848 394" stroke="#c9642a" stroke-width="1.4" fill="none"/><circle cx="839" cy="403" r="1.5" fill="#2d86d2"/><circle cx="848" cy="394" r="1.5" fill="#2d86d2"/><circle cx="848" cy="403" r="1.5" fill="#5aa05a"/>
<path d="M857 404 L867 393" stroke="#c9642a" stroke-width="1.3"/><circle cx="857" cy="404" r="1.5" fill="#2d86d2"/><circle cx="867" cy="393" r="1.5" fill="#2d86d2"/><circle cx="867" cy="403" r="1.5" fill="#5aa05a"/>
<path d="M876 393 L887 404 M887 393 L876 404" stroke="#d5542a" stroke-width="2"/>
<circle cx="903.5" cy="398.5" r="6.5" fill="#fff" stroke="#1f6fb0" stroke-width="1.6"/><circle cx="903.5" cy="398.5" r="4" fill="#2a6fa8"/><path d="M901 398.5 H906 M904 396.5 L906 398.5 L904 400.5" stroke="#222" stroke-width="1.1" fill="none"/>
<path d="M916.0 397 A5.5 5.5 0 0 1 926.5 396" stroke="#1f6fb0" stroke-width="1.8" fill="none"/><path d="M927.0 400 A5.5 5.5 0 0 1 916.5 401" stroke="#1f6fb0" stroke-width="1.8" fill="none"/><path d="M924.5 394 L928.0 396.5 L924.5 398Z" fill="#1f6fb0"/><path d="M918.5 403 L915.0 400.5 L918.5 399Z" fill="#1f6fb0"/>
<path d="M935.0 397 A5.5 5.5 0 0 1 945.5 396" stroke="#1f6fb0" stroke-width="1.8" fill="none"/><path d="M946.0 400 A5.5 5.5 0 0 1 935.5 401" stroke="#1f6fb0" stroke-width="1.8" fill="none"/><path d="M943.5 394 L947.0 396.5 L943.5 398Z" fill="#1f6fb0"/><path d="M937.5 403 L934.0 400.5 L937.5 399Z" fill="#1f6fb0"/><rect x="943" y="400" width="3" height="3" fill="#7fb5e0"/>
<path d="M953.0 397 A5.5 5.5 0 0 1 963.5 396" stroke="#1f6fb0" stroke-width="1.8" fill="none"/><path d="M964.0 400 A5.5 5.5 0 0 1 953.5 401" stroke="#1f6fb0" stroke-width="1.8" fill="none"/><path d="M961.5 394 L965.0 396.5 L961.5 398Z" fill="#1f6fb0"/><path d="M955.5 403 L952.0 400.5 L955.5 399Z" fill="#1f6fb0"/><circle cx="962" cy="402" r="1.8" fill="#5aa05a"/>
<circle cx="977" cy="398.5" r="6" fill="#2a78be"/><circle cx="976" cy="398" r="3.5" fill="#4aa0e0"/><path d="M975 397 L975 405 L977 403 L979 407 L980 406.5 L978.5 402.5 L981 402.5Z" fill="#fff" stroke="#222" stroke-width="0.6"/>
<circle cx="996" cy="398.5" r="6" fill="#c9542a"/><circle cx="996" cy="398.5" r="2.3" fill="#fff"/>
</svg>
<div class="a" style="left:794px;top:411px;width:210px;height:102px;background:#fff;border:1px solid #d0d0d0"></div>
<div class="a" style="left:795px;top:412px;width:200px;height:11px;background:#f3f3f3;border-bottom:1px solid #dcdcdc"></div>
<div class="a" style="left:812px;top:412px;width:1px;height:100px;background:#dcdcdc"></div>
<div class="a" style="left:843px;top:412px;width:1px;height:100px;background:#dcdcdc"></div>
<div class="a" style="left:872px;top:412px;width:1px;height:100px;background:#dcdcdc"></div>
<div class="t" id="tx167" style="left:828px;top:413.5px;font-size:6.5px;color:#222;line-height:7.8px;font-weight:bold;transform:translateX(-50%);transform-origin:50% 0;">名称</div>
<div class="t" id="tx168" style="left:857.5px;top:413.5px;font-size:6.5px;color:#222;line-height:7.8px;font-weight:bold;transform:translateX(-50%);transform-origin:50% 0;">备注</div>
<div class="t" id="tx169" style="left:933.5px;top:413.5px;font-size:6.5px;color:#222;line-height:7.8px;font-weight:bold;transform:translateX(-50%);transform-origin:50% 0;">参数</div>
<div class="a" style="left:795px;top:436.9px;width:200px;height:1px;background:#e4e4e4"></div>
<div class="t" id="tx170" style="left:797px;top:426.6px;font-size:6.5px;color:#333;line-height:7.8px;-webkit-text-stroke:0.1px #333;">397</div>
<div class="t" id="tx171" style="left:815px;top:426.6px;font-size:6.5px;color:#333;line-height:7.8px;transform:scaleX(1.000);transform-origin:0 0;-webkit-text-stroke:0.1px #333;">loc-397</div>
<div class="t" id="tx172" style="left:845px;top:426.6px;font-size:6.5px;color:#333;line-height:7.8px;transform:scaleX(0.972);transform-origin:0 0;-webkit-text-stroke:0.1px #333;">CPOS</div>
<div class="t" id="tx173" style="left:874.4px;top:426.6px;font-size:6.3px;color:#333;line-height:7.56px;transform:scaleX(0.913);transform-origin:0 0;-webkit-text-stroke:0.1px #333;">51.30083,128.84054,620.00000,62.32979,-...</div>
<div class="a" style="left:795px;top:450.1px;width:200px;height:1px;background:#e4e4e4"></div>
<div class="t" id="tx174" style="left:797px;top:439.8px;font-size:6.5px;color:#333;line-height:7.8px;-webkit-text-stroke:0.1px #333;">398</div>
<div class="t" id="tx175" style="left:815px;top:439.8px;font-size:6.5px;color:#333;line-height:7.8px;transform:scaleX(1.000);transform-origin:0 0;-webkit-text-stroke:0.1px #333;">loc-398</div>
<div class="t" id="tx176" style="left:845px;top:439.8px;font-size:6.5px;color:#333;line-height:7.8px;transform:scaleX(0.972);transform-origin:0 0;-webkit-text-stroke:0.1px #333;">CPOS</div>
<div class="t" id="tx177" style="left:874.4px;top:439.8px;font-size:6.3px;color:#333;line-height:7.56px;transform:scaleX(0.913);transform-origin:0 0;-webkit-text-stroke:0.1px #333;">38.61668,133.58518,620.00000,68.29571,-...</div>
<div class="a" style="left:795px;top:463.4px;width:200px;height:1px;background:#e4e4e4"></div>
<div class="t" id="tx178" style="left:797px;top:453.1px;font-size:6.5px;color:#333;line-height:7.8px;-webkit-text-stroke:0.1px #333;">399</div>
<div class="t" id="tx179" style="left:815px;top:453.1px;font-size:6.5px;color:#333;line-height:7.8px;transform:scaleX(1.000);transform-origin:0 0;-webkit-text-stroke:0.1px #333;">loc-399</div>
<div class="t" id="tx180" style="left:845px;top:453.1px;font-size:6.5px;color:#333;line-height:7.8px;transform:scaleX(0.972);transform-origin:0 0;-webkit-text-stroke:0.1px #333;">CPOS</div>
<div class="t" id="tx181" style="left:874.4px;top:453.1px;font-size:6.3px;color:#333;line-height:7.56px;transform:scaleX(0.913);transform-origin:0 0;-webkit-text-stroke:0.1px #333;">28.74065,138.71068,620.00000,73.86800,-...</div>
<div class="a" style="left:795px;top:476.6px;width:200px;height:1px;background:#e4e4e4"></div>
<div class="t" id="tx182" style="left:797px;top:466.3px;font-size:6.5px;color:#333;line-height:7.8px;-webkit-text-stroke:0.1px #333;">400</div>
<div class="t" id="tx183" style="left:815px;top:466.3px;font-size:6.5px;color:#333;line-height:7.8px;transform:scaleX(1.000);transform-origin:0 0;-webkit-text-stroke:0.1px #333;">loc-400</div>
<div class="t" id="tx184" style="left:845px;top:466.3px;font-size:6.5px;color:#333;line-height:7.8px;transform:scaleX(0.972);transform-origin:0 0;-webkit-text-stroke:0.1px #333;">CPOS</div>
<div class="t" id="tx185" style="left:874.4px;top:466.3px;font-size:6.3px;color:#333;line-height:7.56px;transform:scaleX(0.913);transform-origin:0 0;-webkit-text-stroke:0.1px #333;">15.63818,140.59656,620.00000,78.30108,-...</div>
<div class="a" style="left:795px;top:489.8px;width:200px;height:1px;background:#e4e4e4"></div>
<div class="t" id="tx186" style="left:797px;top:479.5px;font-size:6.5px;color:#333;line-height:7.8px;-webkit-text-stroke:0.1px #333;">401</div>
<div class="t" id="tx187" style="left:815px;top:479.5px;font-size:6.5px;color:#333;line-height:7.8px;transform:scaleX(1.000);transform-origin:0 0;-webkit-text-stroke:0.1px #333;">loc-401</div>
<div class="t" id="tx188" style="left:845px;top:479.5px;font-size:6.5px;color:#333;line-height:7.8px;transform:scaleX(0.972);transform-origin:0 0;-webkit-text-stroke:0.1px #333;">CPOS</div>
<div class="t" id="tx189" style="left:874.4px;top:479.5px;font-size:6.3px;color:#333;line-height:7.56px;transform:scaleX(0.920);transform-origin:0 0;-webkit-text-stroke:0.1px #333;">-2.69157,144.20832,620.00000,83.64928,-...</div>
<div class="a" style="left:795px;top:489.9px;width:200px;height:13.2px;background:#f0f0f0"></div>
<div class="a" style="left:795px;top:503.1px;width:200px;height:1px;background:#e4e4e4"></div>
<div class="t" id="tx190" style="left:797px;top:492.8px;font-size:6.5px;color:#333;line-height:7.8px;font-weight:bold;-webkit-text-stroke:0.1px #333;">402</div>
<div class="t" id="tx191" style="left:815px;top:492.8px;font-size:6.5px;color:#333;line-height:7.8px;transform:scaleX(1.000);transform-origin:0 0;-webkit-text-stroke:0.1px #333;">loc-402</div>
<div class="t" id="tx192" style="left:845px;top:492.8px;font-size:6.5px;color:#333;line-height:7.8px;transform:scaleX(0.972);transform-origin:0 0;-webkit-text-stroke:0.1px #333;">CPOS</div>
<div class="t" id="tx193" style="left:874.4px;top:492.8px;font-size:6.3px;color:#333;line-height:7.56px;transform:scaleX(0.920);transform-origin:0 0;-webkit-text-stroke:0.1px #333;">-19.70754,139.4238,620.00000,91.06872,-...</div>
<div class="a" style="left:795px;top:516.3px;width:200px;height:1px;background:#e4e4e4"></div>
<div class="t" id="tx194" style="left:797px;top:506.0px;font-size:6.5px;color:#333;line-height:7.8px;-webkit-text-stroke:0.1px #333;">403</div>
<div class="t" id="tx195" style="left:815px;top:506.0px;font-size:6.5px;color:#333;line-height:7.8px;transform:scaleX(1.000);transform-origin:0 0;-webkit-text-stroke:0.1px #333;">loc-403</div>
<div class="t" id="tx196" style="left:845px;top:506.0px;font-size:6.5px;color:#333;line-height:7.8px;transform:scaleX(0.972);transform-origin:0 0;-webkit-text-stroke:0.1px #333;">CPOS</div>
<div class="t" id="tx197" style="left:874.4px;top:506.0px;font-size:6.3px;color:#333;line-height:7.56px;transform:scaleX(0.913);transform-origin:0 0;-webkit-text-stroke:0.1px #333;">-33.09457,140.45655,620.00000,98.04359....</div>
<div class="a" style="left:995px;top:412px;width:9px;height:100px;background:#f6f6f6;border-left:1px solid #e0e0e0"></div>
<svg class="a" style="left:995px;top:412px" width="9" height="100"><path d="M2 9 L4.5 6 L7 9Z" fill="#222"/><path d="M2 93 L4.5 96 L7 93Z" fill="#222"/><rect x="1.5" y="19" width="6" height="8" fill="#f2f2f2" stroke="#aaa" stroke-width="0.6"/><path d="M3 22 H6 M3 23.5 H6" stroke="#999" stroke-width="0.5"/></svg>
</body></html>
